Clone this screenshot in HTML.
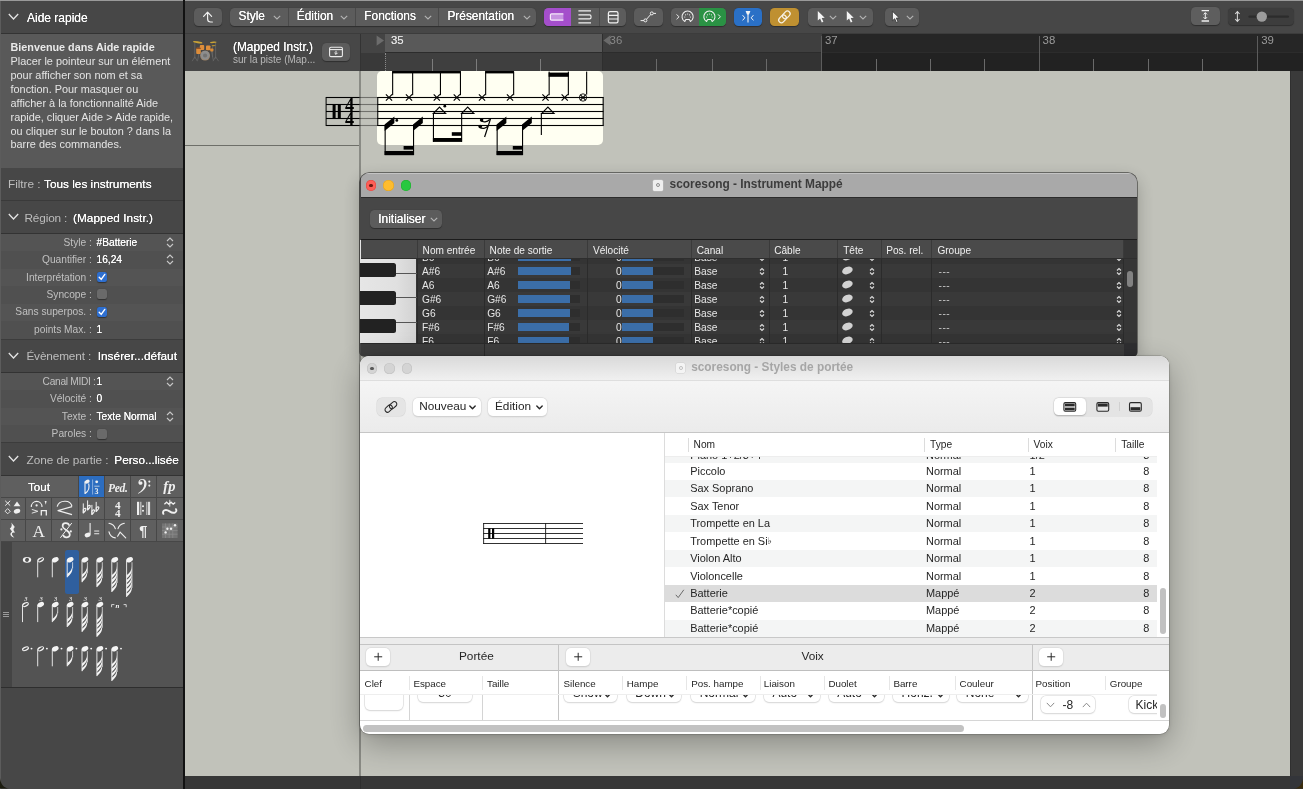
<!DOCTYPE html>
<html lang="fr"><head><meta charset="utf-8"><title>Logic Pro - Partition</title>
<style>
html,body{margin:0;padding:0}
body{width:1303px;height:790px;overflow:hidden;position:relative;background:#c1c2ba;font-family:"Liberation Sans","DejaVu Sans",sans-serif;-webkit-font-smoothing:antialiased}
.a{position:absolute;box-sizing:border-box}
.t{position:absolute;white-space:nowrap;line-height:1}
svg{position:absolute;overflow:visible}
#root{position:absolute;left:0;top:0;width:1303px;height:790px;overflow:hidden;will-change:transform;opacity:0.9999}
</style></head><body><div id="root">
<div class="a" id="left" style="left:0;top:0;width:183px;height:790px;background:#474747;overflow:hidden">
<div class="a" style="left:0px;top:0px;width:183px;height:1px;background:#9a9a9a;"></div>
<svg style="left:8px;top:13px" width="11" height="8" viewBox="0 0 11 8"><path d="M0.8 1 L5.5 6 L10.2 1" fill="none" stroke="#e4e4e4" stroke-width="1.3"/></svg>
<div class="t" style="top:12.30px;font-size:12.0px;color:#fff;left:27px;text-shadow:0 0 .4px #fff;">Aide rapide</div>
<div class="a" style="left:0px;top:33px;width:183px;height:1px;background:#333;"></div>
<div class="a" style="left:0px;top:34px;width:183px;height:134px;background:#595959;"></div>
<div class="t" style="top:41.90px;font-size:10.8px;color:#e9e9e9;font-weight:bold;left:10.5px;">Bienvenue dans Aide rapide</div>
<div class="t" style="top:56.35px;font-size:10.9px;color:#e4e4e4;left:10.5px;">Placer le pointeur sur un élément</div>
<div class="t" style="top:70.20px;font-size:10.9px;color:#e4e4e4;left:10.5px;">pour afficher son nom et sa</div>
<div class="t" style="top:84.05px;font-size:10.9px;color:#e4e4e4;left:10.5px;">fonction. Pour masquer ou</div>
<div class="t" style="top:97.90px;font-size:10.9px;color:#e4e4e4;left:10.5px;">afficher à la fonctionnalité Aide</div>
<div class="t" style="top:111.75px;font-size:10.9px;color:#e4e4e4;left:10.5px;">rapide, cliquer Aide &gt; Aide rapide,</div>
<div class="t" style="top:125.60px;font-size:10.9px;color:#e4e4e4;left:10.5px;">ou cliquer sur le bouton ? dans la</div>
<div class="t" style="top:139.45px;font-size:10.9px;color:#e4e4e4;left:10.5px;">barre des commandes.</div>
<div class="t" style="top:178.70px;font-size:11.8px;color:#bdbdbd;letter-spacing:-0.03px;left:8px;">Filtre :</div>
<div class="t" style="top:178.70px;font-size:11.8px;color:#fff;left:44px;text-shadow:0 0 .4px #fff;">Tous les instruments</div>
<div class="a" style="left:0px;top:200px;width:183px;height:1px;background:#3a3a3a;"></div>
<svg style="left:8px;top:213px" width="11" height="8" viewBox="0 0 11 8"><path d="M0.8 1 L5.5 6 L10.2 1" fill="none" stroke="#e4e4e4" stroke-width="1.3"/></svg>
<div class="t" style="top:212.50px;font-size:11.8px;color:#bdbdbd;letter-spacing:-0.15px;left:24.5px;">Région :</div>
<div class="t" style="top:212.50px;font-size:11.8px;color:#fff;letter-spacing:0.045px;left:73px;text-shadow:0 0 .4px #fff;">(Mapped Instr.)</div>
<div class="a" style="left:0px;top:233px;width:183px;height:1px;background:#333;"></div>
<div class="a" style="left:0px;top:234px;width:183px;height:105px;background:#505050;"></div>
<div class="a" style="left:0px;top:234.0px;width:183px;height:17.4px;background:#545454;"></div>
<div class="a" style="left:0px;top:268.8px;width:183px;height:17.4px;background:#545454;"></div>
<div class="a" style="left:0px;top:303.6px;width:183px;height:17.4px;background:#545454;"></div>
<div class="t" style="top:237.70px;font-size:10.2px;color:#c0c0c0;right:calc(100% - 91.8px);">Style :</div>
<div class="t" style="top:237.70px;font-size:10.2px;color:#fff;left:96.5px;text-shadow:0 0 .4px #fff;">#Batterie</div>
<svg style="left:166px;top:236.5px" width="8" height="11" viewBox="0 0 8 11"><path d="M1 4 L4 1 L7 4 M1 7 L4 10 L7 7" fill="none" stroke="#c8c8c8" stroke-width="1.1"/></svg>
<div class="t" style="top:255.10px;font-size:10.2px;color:#c0c0c0;right:calc(100% - 91.8px);">Quantifier :</div>
<div class="t" style="top:255.10px;font-size:10.2px;color:#fff;left:96.5px;text-shadow:0 0 .4px #fff;">16,24</div>
<svg style="left:166px;top:253.89999999999998px" width="8" height="11" viewBox="0 0 8 11"><path d="M1 4 L4 1 L7 4 M1 7 L4 10 L7 7" fill="none" stroke="#c8c8c8" stroke-width="1.1"/></svg>
<div class="t" style="top:272.50px;font-size:10.2px;color:#c0c0c0;right:calc(100% - 91.8px);">Interprétation :</div>
<div class="a" style="left:96.8px;top:271.8px;width:10px;height:10px;border-radius:2.2px;background:#2e6fd0;box-shadow:0 .5px 1px rgba(0,0,0,.4)"><svg style="left:0;top:0" width="10" height="10" viewBox="0 0 10 10"><path d="M2.2 5.2 L4.2 7.4 L7.8 2.4" fill="none" stroke="#fff" stroke-width="1.4" stroke-linecap="round" stroke-linejoin="round"/></svg></div>
<div class="t" style="top:289.90px;font-size:10.2px;color:#c0c0c0;right:calc(100% - 91.8px);">Syncope :</div>
<div class="a" style="left:96.8px;top:289.2px;width:10px;height:10px;border-radius:2.2px;background:#6a6a6a;box-shadow:0 .5px 1px rgba(0,0,0,.4)"></div>
<div class="t" style="top:307.30px;font-size:10.2px;color:#c0c0c0;right:calc(100% - 91.8px);">Sans superpos. :</div>
<div class="a" style="left:96.8px;top:306.6px;width:10px;height:10px;border-radius:2.2px;background:#2e6fd0;box-shadow:0 .5px 1px rgba(0,0,0,.4)"><svg style="left:0;top:0" width="10" height="10" viewBox="0 0 10 10"><path d="M2.2 5.2 L4.2 7.4 L7.8 2.4" fill="none" stroke="#fff" stroke-width="1.4" stroke-linecap="round" stroke-linejoin="round"/></svg></div>
<div class="t" style="top:324.70px;font-size:10.2px;color:#c0c0c0;right:calc(100% - 91.8px);">points Max. :</div>
<div class="t" style="top:324.70px;font-size:10.2px;color:#fff;left:96.5px;text-shadow:0 0 .4px #fff;">1</div>
<div class="a" style="left:0px;top:338.5px;width:183px;height:1px;background:#3c3c3c;"></div>
<svg style="left:8px;top:352px" width="11" height="8" viewBox="0 0 11 8"><path d="M0.8 1 L5.5 6 L10.2 1" fill="none" stroke="#e4e4e4" stroke-width="1.3"/></svg>
<div class="t" style="top:350.60px;font-size:11.8px;color:#bdbdbd;letter-spacing:-0.14px;left:26.4px;">Évènement :</div>
<div class="t" style="top:350.60px;font-size:11.8px;color:#fff;letter-spacing:0.04px;left:97.7px;text-shadow:0 0 .4px #fff;">Insérer...défaut</div>
<div class="a" style="left:0px;top:372px;width:183px;height:1px;background:#333;"></div>
<div class="a" style="left:0px;top:373px;width:183px;height:69px;background:#505050;"></div>
<div class="a" style="left:0px;top:373.0px;width:183px;height:17.3px;background:#545454;"></div>
<div class="a" style="left:0px;top:407.6px;width:183px;height:17.3px;background:#545454;"></div>
<div class="t" style="top:377.00px;font-size:10.2px;color:#c0c0c0;letter-spacing:-0.3px;right:calc(100% - 95.6px);">Canal MIDI :</div>
<div class="t" style="top:377.00px;font-size:10.2px;color:#fff;left:96.5px;text-shadow:0 0 .4px #fff;">1</div>
<svg style="left:166px;top:375.8px" width="8" height="11" viewBox="0 0 8 11"><path d="M1 4 L4 1 L7 4 M1 7 L4 10 L7 7" fill="none" stroke="#c8c8c8" stroke-width="1.1"/></svg>
<div class="t" style="top:394.40px;font-size:10.2px;color:#c0c0c0;right:calc(100% - 91.8px);">Vélocité :</div>
<div class="t" style="top:394.40px;font-size:10.2px;color:#fff;left:96.5px;text-shadow:0 0 .4px #fff;">0</div>
<div class="t" style="top:411.80px;font-size:10.2px;color:#c0c0c0;right:calc(100% - 91.8px);">Texte :</div>
<div class="t" style="top:411.80px;font-size:10.2px;color:#fff;left:96.5px;text-shadow:0 0 .4px #fff;">Texte Normal</div>
<svg style="left:166px;top:410.6px" width="8" height="11" viewBox="0 0 8 11"><path d="M1 4 L4 1 L7 4 M1 7 L4 10 L7 7" fill="none" stroke="#c8c8c8" stroke-width="1.1"/></svg>
<div class="t" style="top:429.20px;font-size:10.2px;color:#c0c0c0;right:calc(100% - 91.8px);">Paroles :</div>
<div class="a" style="left:96.8px;top:428.5px;width:10px;height:10px;border-radius:2.2px;background:#6a6a6a;box-shadow:0 .5px 1px rgba(0,0,0,.4)"></div>
<div class="a" style="left:0px;top:442px;width:183px;height:1px;background:#3c3c3c;"></div>
<svg style="left:8px;top:455px" width="11" height="8" viewBox="0 0 11 8"><path d="M0.8 1 L5.5 6 L10.2 1" fill="none" stroke="#e4e4e4" stroke-width="1.3"/></svg>
<div class="t" style="top:454.70px;font-size:11.8px;color:#bdbdbd;letter-spacing:-0.045px;left:26.6px;">Zone de partie :</div>
<div class="t" style="top:454.70px;font-size:11.8px;color:#fff;letter-spacing:-0.04px;left:114.3px;text-shadow:0 0 .4px #fff;">Perso...lisée</div>
<div class="a" style="left:0px;top:475px;width:183px;height:1px;background:#333;"></div>
<div class="a" style="left:0px;top:476px;width:77.7px;height:21.3px;background:#5f5f5f;"></div>
<div class="a" style="left:78.5px;top:476px;width:25.7px;height:21.3px;background:#2c6dc0;"></div>
<div class="a" style="left:105px;top:476px;width:25.3px;height:21.3px;background:#5f5f5f;"></div>
<div class="a" style="left:131px;top:476px;width:25.3px;height:21.3px;background:#5f5f5f;"></div>
<div class="a" style="left:157px;top:476px;width:26px;height:21.3px;background:#5f5f5f;"></div>
<div class="a" style="left:0px;top:498px;width:25.3px;height:21.3px;background:#5f5f5f;"></div>
<div class="a" style="left:26px;top:498px;width:25.3px;height:21.3px;background:#5f5f5f;"></div>
<div class="a" style="left:52px;top:498px;width:25.7px;height:21.3px;background:#5f5f5f;"></div>
<div class="a" style="left:78.5px;top:498px;width:25.7px;height:21.3px;background:#5f5f5f;"></div>
<div class="a" style="left:105px;top:498px;width:25.3px;height:21.3px;background:#5f5f5f;"></div>
<div class="a" style="left:131px;top:498px;width:25.3px;height:21.3px;background:#5f5f5f;"></div>
<div class="a" style="left:157px;top:498px;width:26px;height:21.3px;background:#5f5f5f;"></div>
<div class="a" style="left:0px;top:520px;width:25.3px;height:21.3px;background:#5f5f5f;"></div>
<div class="a" style="left:26px;top:520px;width:25.3px;height:21.3px;background:#5f5f5f;"></div>
<div class="a" style="left:52px;top:520px;width:25.7px;height:21.3px;background:#5f5f5f;"></div>
<div class="a" style="left:78.5px;top:520px;width:25.7px;height:21.3px;background:#5f5f5f;"></div>
<div class="a" style="left:105px;top:520px;width:25.3px;height:21.3px;background:#5f5f5f;"></div>
<div class="a" style="left:131px;top:520px;width:25.3px;height:21.3px;background:#5f5f5f;"></div>
<div class="a" style="left:157px;top:520px;width:26px;height:21.3px;background:#5f5f5f;"></div>
<div class="t" style="top:480.90px;font-size:11.6px;color:#fff;left:39px;transform:translateX(-50%);text-shadow:0 0 .4px #fff;">Tout</div>
<svg style="left:78.5px;top:476px" width="26" height="21" viewBox="0 0 26 21">
<ellipse cx="8.2" cy="5.6" rx="2.6" ry="1.9" transform="rotate(-25 8.2 5.6)" fill="#efefef"/>
<path d="M6 5.5 V18 M6.2 17.5 C9.5 15 11 12 9.6 7.5" fill="none" stroke="#efefef" stroke-width="1.1"/>
<path d="M13.6 3.5 V18.5" stroke="#9dbde6" stroke-width="0.8"/>
<circle cx="17.7" cy="5.8" r="1.4" fill="#efefef"/>
<path d="M15.3 10.2 H20.5" stroke="#efefef" stroke-width="0.7"/>
<text x="15.6" y="18" font-family="'Liberation Serif','DejaVu Serif',serif" font-weight="bold" font-size="8" fill="#efefef">3</text>
</svg>
<div class="t" style="top:482.85px;font-size:11.5px;color:#efefef;font-weight:bold;font-family:'Liberation Serif','DejaVu Serif',serif;left:117.8px;transform:translateX(-50%);font-style:italic;letter-spacing:-0.3px;">Ped.</div>
<svg style="left:131px;top:476px" width="26" height="21" viewBox="0 0 26 21">
<path d="M7.2 17.8 C12.5 15.5 15.6 11.8 15.6 7.6 C15.6 4.6 13.8 2.9 11.4 2.9 C9.0 2.9 7.4 4.5 7.4 6.4 C7.4 7.9 8.4 8.8 9.6 8.8 C10.7 8.8 11.5 8 11.5 7 C11.5 6 10.7 5.4 9.8 5.5 C9.3 5.5 9 5.7 8.7 5.9 C8.8 4.7 9.8 3.8 11.1 3.8 C12.6 3.8 13.3 5.3 13.3 7.6 C13.3 11.6 11 15 7 17.3 Z" fill="#efefef"/>
<circle cx="18.3" cy="5.6" r="1.05" fill="#efefef"/><circle cx="18.3" cy="9.6" r="1.05" fill="#efefef"/></svg>
<div class="t" style="top:479.15px;font-size:14.5px;color:#efefef;font-weight:bold;font-family:'Liberation Serif','DejaVu Serif',serif;left:169.4px;transform:translateX(-50%);font-style:italic;">fp</div>
<svg style="left:0px;top:498px" width="183" height="21" viewBox="0 0 183 21">
<g fill="none" stroke="#efefef" stroke-width="1">
<path d="M5.2 2.8 L10.2 7.6 M10.2 2.8 L5.2 7.6"/>
<path d="M7.7 10.6 L10.3 13.2 L7.7 15.8 L5.1 13.2 Z" stroke-width="0.9"/>
</g>
<path d="M13.6 8.2 L17 3.4 L20.4 8.2 Z" fill="#efefef"/>
<ellipse cx="17" cy="13.2" rx="3.3" ry="2.3" transform="rotate(-20 17 13.2)" fill="#efefef"/>
<!-- fermata etc -->
<g fill="none" stroke="#efefef" stroke-width="1.1">
<path d="M31.3 9 C31.3 1.5 42 1.5 42 9"/>
<path d="M31.8 11.4 L37.8 13.3 L31.8 15.2" stroke-width="0.9"/>
<path d="M41.3 17.5 V12.6 H46.3 V17.5" stroke-width="1.3"/>
</g>
<circle cx="36.6" cy="7.4" r="1.1" fill="#efefef"/>
<path d="M44.6 3 L46.6 3 L45.8 6.8 Z" fill="#efefef"/>
<!-- slur / hairpin -->
<g fill="none" stroke="#efefef" stroke-width="1.15" stroke-linejoin="round">
<path d="M57.2 8.6 C59 1.8 70.5 1.2 72 8.4"/>
<path d="M72 8.6 L58 12.6 L72 16.6"/>
</g>
<!-- flats -->
<path d="M83.3 5.4 V15.0" stroke="#efefef" stroke-width="1" fill="none"/><path d="M83.3 11.4 C85.7 9.0 87.7 11.0 83.3 15.0 Z" fill="none" stroke="#efefef" stroke-width="1.15" stroke-linejoin="round"/><path d="M87.6 2.4 V12.0" stroke="#efefef" stroke-width="1" fill="none"/><path d="M87.6 8.4 C90.0 6.0 92.0 8.0 87.6 12.0 Z" fill="none" stroke="#efefef" stroke-width="1.15" stroke-linejoin="round"/><path d="M91.9 6.9 V16.5" stroke="#efefef" stroke-width="1" fill="none"/><path d="M91.9 12.9 C94.30000000000001 10.5 96.30000000000001 12.5 91.9 16.5 Z" fill="none" stroke="#efefef" stroke-width="1.15" stroke-linejoin="round"/><path d="M96.2 3.9 V13.5" stroke="#efefef" stroke-width="1" fill="none"/><path d="M96.2 9.9 C98.60000000000001 7.5 100.60000000000001 9.5 96.2 13.5 Z" fill="none" stroke="#efefef" stroke-width="1.15" stroke-linejoin="round"/>
<!-- repeat bars -->
<rect x="137" y="3.8" width="2.2" height="13.2" fill="#efefef"/><rect x="140.4" y="3.8" width="0.9" height="13.2" fill="#efefef"/>
<circle cx="143" cy="8.2" r="1.05" fill="#efefef"/><circle cx="143" cy="12.8" r="1.05" fill="#efefef"/>
<rect x="146.4" y="3.8" width="0.9" height="13.2" fill="#dcdcdc"/><rect x="148" y="3.8" width="2.1" height="13.2" fill="#dcdcdc"/>
<!-- ornaments -->
<g fill="none" stroke="#efefef" stroke-linecap="round">
<path d="M163.4 15.8 C161.8 12.6 165.6 10.6 169.6 13.4 C173.6 16.2 177.6 14.4 176 11.2" stroke-width="1.9"/>
<path d="M164.4 6.2 L166.6 4.2 L168.8 6.2 L171 4.2 L173.2 6.2 L175.2 4.4" stroke-width="1.3" stroke-linecap="butt"/>
<path d="M169.8 2.2 V8.2" stroke-width="0.9"/>
</g>
</svg>
<div class="t" style="top:500.00px;font-size:11.2px;color:#efefef;font-weight:bold;font-family:'Liberation Serif','DejaVu Serif',serif;left:117.8px;transform:translateX(-50%);">4</div>
<div class="t" style="top:507.80px;font-size:11.2px;color:#efefef;font-weight:bold;font-family:'Liberation Serif','DejaVu Serif',serif;left:117.8px;transform:translateX(-50%);">4</div>
<svg style="left:0px;top:520px" width="183" height="21" viewBox="0 0 183 21">
<!-- quarter rest -->
<path d="M11.3 2.4 L14.8 7 C13 8.6 13 10.2 15.2 12.6 C13 12 11.6 12.8 12 14.6 C12.3 15.8 13.2 16.6 14.4 17.6 C10.8 16.6 9.2 14.2 11.4 12.2 L12 11.6 L9.8 8.6 C11.8 7 12.2 5 11.3 2.4 Z" fill="#efefef"/>
<!-- segno -->
<g fill="none" stroke="#efefef">
<path d="M69.2 5.6 C68.4 2.2 62.4 2.4 62.6 6.2 C62.8 9.8 69.6 10.4 69.8 14.4 C70 18 64 18.4 63.2 15" stroke-width="1.7"/>
<path d="M60.4 17.8 L71.8 3" stroke-width="1"/>
</g>
<circle cx="61.4" cy="9.4" r="1.1" fill="#efefef"/><circle cx="70.8" cy="11.4" r="1.1" fill="#efefef"/>
<!-- quarter = -->
<ellipse cx="87.6" cy="15" rx="3" ry="2.2" transform="rotate(-22 87.6 15)" fill="#efefef"/>
<path d="M90.1 14.6 V3" stroke="#efefef" stroke-width="1.1"/>
<rect x="94.2" y="10.4" width="5" height="1.3" fill="#c8c8c8"/><rect x="94.2" y="13" width="5" height="1.3" fill="#c8c8c8"/>
<!-- crossing curves -->
<g fill="none" stroke="#efefef" stroke-width="1.15" stroke-linecap="round">
<path d="M109 3.3 Q114.2 4.4 115.3 8.6"/>
<path d="M109 11.8 Q110 16.8 115.3 17.9"/>
<path d="M124.3 3.3 Q119.2 4.4 118 8.6"/>
<path d="M117.6 16.2 L120.1 12.2 L125.7 17.9"/>
</g>
<!-- grid -->
<rect x="162" y="3.4" width="15.6" height="14.6" fill="#747474"/>
<g stroke="#8e8e8e" stroke-width="0.7"><path d="M165.6 3.4 V18 M169.2 3.4 V18 M172.8 3.4 V18 M162 7 H177.6 M162 10.6 H177.6 M162 14.2 H177.6"/></g>
<circle cx="175" cy="5.2" r="1.2" fill="#efefef"/><circle cx="171" cy="8.8" r="1.2" fill="#efefef"/><circle cx="167.4" cy="8.8" r="1.2" fill="#efefef"/><circle cx="165.6" cy="12.4" r="1.2" fill="#efefef"/>
</svg>
<div class="t" style="top:523.30px;font-size:17.2px;color:#efefef;font-family:'Liberation Serif','DejaVu Serif',serif;left:38.8px;transform:translateX(-50%);">A</div>
<div class="t" style="top:524.35px;font-size:14.5px;color:#efefef;font-weight:bold;left:143.4px;transform:translateX(-50%);">¶</div>
<div class="a" style="left:0px;top:541.5px;width:183px;height:145.5px;background:#535353;"></div>
<div class="a" style="left:0px;top:541.5px;width:12px;height:145.5px;background:#444444;"></div>
<div class="a" style="left:0px;top:687px;width:183px;height:1px;background:#2e2e2e;"></div>
<div class="a" style="left:64.8px;top:550px;width:14.4px;height:43.6px;background:#2f5f9e;border-radius:2.5px"></div>
<div class="a" style="left:3px;top:611.6px;width:6.2px;height:0.8px;background:#9a9a9a;"></div>
<div class="a" style="left:3px;top:613.7px;width:6.2px;height:0.8px;background:#9a9a9a;"></div>
<div class="a" style="left:3px;top:615.8000000000001px;width:6.2px;height:0.8px;background:#9a9a9a;"></div>
<svg style="left:0;top:0" width="183" height="790" viewBox="0 0 183 790"><ellipse cx="27" cy="559.8" rx="4.2" ry="2.9" fill="#f4f4f4"/><ellipse cx="27" cy="559.8" rx="1.9" ry="2.1" transform="rotate(35 27 559.8)" fill="#535353"/><ellipse cx="40.7" cy="559.8" rx="3.5" ry="2.2" transform="rotate(-25 40.7 559.8)" fill="#f4f4f4"/><ellipse cx="40.7" cy="559.8" rx="2.7" ry="0.9" transform="rotate(-32 40.7 559.8)" fill="#535353"/><path d="M37.7 560.4 V577.3" stroke="#f4f4f4" stroke-width="0.9" fill="none"/><ellipse cx="55.3" cy="559.8" rx="3.5" ry="2.4" transform="rotate(-25 55.3 559.8)" fill="#f4f4f4"/><path d="M52.3 560.4 V577.3" stroke="#f4f4f4" stroke-width="0.9" fill="none"/><ellipse cx="70.2" cy="559.8" rx="3.5" ry="2.4" transform="rotate(-25 70.2 559.8)" fill="#f4f4f4"/><path d="M67.2 560.4 V577.3" stroke="#f4f4f4" stroke-width="0.9" fill="none"/><path d="M67.2 577.3 C70.4 574.6999999999999 72.8 571.3 72.4 567.6999999999999 L72.4 565.0999999999999 C72.4 569.3 70.2 571.9 67.2 574.0999999999999 Z" fill="#f4f4f4"/><path d="M72.60000000000001 562.1999999999999 V568.3" stroke="#f4f4f4" stroke-width="0.7" fill="none"/><ellipse cx="85" cy="559.8" rx="3.5" ry="2.4" transform="rotate(-25 85 559.8)" fill="#f4f4f4"/><path d="M82.0 560.4 V582.1999999999999" stroke="#f4f4f4" stroke-width="0.9" fill="none"/><path d="M82.0 582.1999999999999 C85.2 579.5999999999999 87.6 576.1999999999999 87.2 572.5999999999999 L87.2 569.9999999999999 C87.2 574.1999999999999 85.0 576.8 82.0 578.9999999999999 Z" fill="#f4f4f4"/><path d="M82.0 577.5999999999999 C85.2 574.9999999999999 87.6 571.5999999999999 87.2 567.9999999999999 L87.2 565.3999999999999 C87.2 569.5999999999999 85.0 572.1999999999999 82.0 574.3999999999999 Z" fill="#f4f4f4"/><path d="M87.4 562.1999999999999 V573.1999999999999" stroke="#f4f4f4" stroke-width="0.7" fill="none"/><ellipse cx="99.9" cy="559.8" rx="3.5" ry="2.4" transform="rotate(-25 99.9 559.8)" fill="#f4f4f4"/><path d="M96.9 560.4 V587.0999999999999" stroke="#f4f4f4" stroke-width="0.9" fill="none"/><path d="M96.9 587.0999999999999 C100.10000000000001 584.4999999999999 102.5 581.0999999999999 102.10000000000001 577.4999999999999 L102.10000000000001 574.8999999999999 C102.10000000000001 579.0999999999999 99.9 581.6999999999999 96.9 583.8999999999999 Z" fill="#f4f4f4"/><path d="M96.9 582.4999999999999 C100.10000000000001 579.8999999999999 102.5 576.4999999999999 102.10000000000001 572.8999999999999 L102.10000000000001 570.2999999999998 C102.10000000000001 574.4999999999999 99.9 577.0999999999999 96.9 579.2999999999998 Z" fill="#f4f4f4"/><path d="M96.9 577.8999999999999 C100.10000000000001 575.2999999999998 102.5 571.8999999999999 102.10000000000001 568.2999999999998 L102.10000000000001 565.6999999999998 C102.10000000000001 569.8999999999999 99.9 572.4999999999999 96.9 574.6999999999998 Z" fill="#f4f4f4"/><path d="M102.30000000000001 562.1999999999999 V578.0999999999999" stroke="#f4f4f4" stroke-width="0.7" fill="none"/><ellipse cx="114.8" cy="559.8" rx="3.5" ry="2.4" transform="rotate(-25 114.8 559.8)" fill="#f4f4f4"/><path d="M111.8 560.4 V592.0" stroke="#f4f4f4" stroke-width="0.9" fill="none"/><path d="M111.8 592.0 C115.0 589.4 117.39999999999999 586.0 117.0 582.4 L117.0 579.8 C117.0 584.0 114.8 586.6 111.8 588.8 Z" fill="#f4f4f4"/><path d="M111.8 587.4 C115.0 584.8 117.39999999999999 581.4 117.0 577.8 L117.0 575.1999999999999 C117.0 579.4 114.8 582.0 111.8 584.1999999999999 Z" fill="#f4f4f4"/><path d="M111.8 582.8 C115.0 580.1999999999999 117.39999999999999 576.8 117.0 573.1999999999999 L117.0 570.5999999999999 C117.0 574.8 114.8 577.4 111.8 579.5999999999999 Z" fill="#f4f4f4"/><path d="M111.8 578.2 C115.0 575.6 117.39999999999999 572.2 117.0 568.6 L117.0 566.0 C117.0 570.2 114.8 572.8000000000001 111.8 575.0 Z" fill="#f4f4f4"/><path d="M117.2 562.1999999999999 V583.0" stroke="#f4f4f4" stroke-width="0.7" fill="none"/><ellipse cx="129.6" cy="559.8" rx="3.5" ry="2.4" transform="rotate(-25 129.6 559.8)" fill="#f4f4f4"/><path d="M126.6 560.4 V596.9" stroke="#f4f4f4" stroke-width="0.9" fill="none"/><path d="M126.6 596.9 C129.79999999999998 594.3 132.2 590.9 131.79999999999998 587.3 L131.79999999999998 584.6999999999999 C131.79999999999998 588.9 129.6 591.5 126.6 593.6999999999999 Z" fill="#f4f4f4"/><path d="M126.6 592.3 C129.79999999999998 589.6999999999999 132.2 586.3 131.79999999999998 582.6999999999999 L131.79999999999998 580.0999999999999 C131.79999999999998 584.3 129.6 586.9 126.6 589.0999999999999 Z" fill="#f4f4f4"/><path d="M126.6 587.6999999999999 C129.79999999999998 585.0999999999999 132.2 581.6999999999999 131.79999999999998 578.0999999999999 L131.79999999999998 575.4999999999999 C131.79999999999998 579.6999999999999 129.6 582.3 126.6 584.4999999999999 Z" fill="#f4f4f4"/><path d="M126.6 583.1 C129.79999999999998 580.5 132.2 577.1 131.79999999999998 573.5 L131.79999999999998 570.9 C131.79999999999998 575.1 129.6 577.7 126.6 579.9 Z" fill="#f4f4f4"/><path d="M126.6 578.5 C129.79999999999998 575.9 132.2 572.5 131.79999999999998 568.9 L131.79999999999998 566.3 C131.79999999999998 570.5 129.6 573.1 126.6 575.3 Z" fill="#f4f4f4"/><path d="M132.0 562.1999999999999 V587.9" stroke="#f4f4f4" stroke-width="0.7" fill="none"/><ellipse cx="25.5" cy="604.6" rx="3.5" ry="2.2" transform="rotate(-25 25.5 604.6)" fill="#f4f4f4"/><ellipse cx="25.5" cy="604.6" rx="2.7" ry="0.9" transform="rotate(-32 25.5 604.6)" fill="#535353"/><path d="M22.5 605.2 V622.1" stroke="#f4f4f4" stroke-width="0.9" fill="none"/><text x="24.3" y="601.0" font-family="'Liberation Serif',serif" font-style="italic" font-size="6.5" fill="#f4f4f4">3</text><ellipse cx="40.7" cy="604.6" rx="3.5" ry="2.4" transform="rotate(-25 40.7 604.6)" fill="#f4f4f4"/><path d="M37.7 605.2 V622.1" stroke="#f4f4f4" stroke-width="0.9" fill="none"/><text x="39.5" y="601.0" font-family="'Liberation Serif',serif" font-style="italic" font-size="6.5" fill="#f4f4f4">3</text><ellipse cx="55.3" cy="604.6" rx="3.5" ry="2.4" transform="rotate(-25 55.3 604.6)" fill="#f4f4f4"/><path d="M52.3 605.2 V622.1" stroke="#f4f4f4" stroke-width="0.9" fill="none"/><path d="M52.3 622.1 C55.5 619.5 57.9 616.1 57.5 612.5 L57.5 609.9 C57.5 614.1 55.3 616.7 52.3 618.9 Z" fill="#f4f4f4"/><path d="M57.699999999999996 607.0 V613.1" stroke="#f4f4f4" stroke-width="0.7" fill="none"/><text x="54.099999999999994" y="601.0" font-family="'Liberation Serif',serif" font-style="italic" font-size="6.5" fill="#f4f4f4">3</text><ellipse cx="70.2" cy="604.6" rx="3.5" ry="2.4" transform="rotate(-25 70.2 604.6)" fill="#f4f4f4"/><path d="M67.2 605.2 V627.0" stroke="#f4f4f4" stroke-width="0.9" fill="none"/><path d="M67.2 627.0 C70.4 624.4 72.8 621.0 72.4 617.4 L72.4 614.8 C72.4 619.0 70.2 621.6 67.2 623.8 Z" fill="#f4f4f4"/><path d="M67.2 622.4 C70.4 619.8 72.8 616.4 72.4 612.8 L72.4 610.1999999999999 C72.4 614.4 70.2 617.0 67.2 619.1999999999999 Z" fill="#f4f4f4"/><path d="M72.60000000000001 607.0 V618.0" stroke="#f4f4f4" stroke-width="0.7" fill="none"/><text x="69.0" y="601.0" font-family="'Liberation Serif',serif" font-style="italic" font-size="6.5" fill="#f4f4f4">3</text><ellipse cx="85" cy="604.6" rx="3.5" ry="2.4" transform="rotate(-25 85 604.6)" fill="#f4f4f4"/><path d="M82.0 605.2 V631.9" stroke="#f4f4f4" stroke-width="0.9" fill="none"/><path d="M82.0 631.9 C85.2 629.3 87.6 625.9 87.2 622.3 L87.2 619.6999999999999 C87.2 623.9 85.0 626.5 82.0 628.6999999999999 Z" fill="#f4f4f4"/><path d="M82.0 627.3 C85.2 624.6999999999999 87.6 621.3 87.2 617.6999999999999 L87.2 615.0999999999999 C87.2 619.3 85.0 621.9 82.0 624.0999999999999 Z" fill="#f4f4f4"/><path d="M82.0 622.6999999999999 C85.2 620.0999999999999 87.6 616.6999999999999 87.2 613.0999999999999 L87.2 610.4999999999999 C87.2 614.6999999999999 85.0 617.3 82.0 619.4999999999999 Z" fill="#f4f4f4"/><path d="M87.4 607.0 V622.9" stroke="#f4f4f4" stroke-width="0.7" fill="none"/><text x="83.8" y="601.0" font-family="'Liberation Serif',serif" font-style="italic" font-size="6.5" fill="#f4f4f4">3</text><ellipse cx="99.9" cy="604.6" rx="3.5" ry="2.4" transform="rotate(-25 99.9 604.6)" fill="#f4f4f4"/><path d="M96.9 605.2 V636.8000000000001" stroke="#f4f4f4" stroke-width="0.9" fill="none"/><path d="M96.9 636.8000000000001 C100.10000000000001 634.2 102.5 630.8000000000001 102.10000000000001 627.2 L102.10000000000001 624.6 C102.10000000000001 628.8000000000001 99.9 631.4000000000001 96.9 633.6 Z" fill="#f4f4f4"/><path d="M96.9 632.2 C100.10000000000001 629.6 102.5 626.2 102.10000000000001 622.6 L102.10000000000001 620.0 C102.10000000000001 624.2 99.9 626.8000000000001 96.9 629.0 Z" fill="#f4f4f4"/><path d="M96.9 627.6 C100.10000000000001 625.0 102.5 621.6 102.10000000000001 618.0 L102.10000000000001 615.4 C102.10000000000001 619.6 99.9 622.2 96.9 624.4 Z" fill="#f4f4f4"/><path d="M96.9 623.0000000000001 C100.10000000000001 620.4000000000001 102.5 617.0000000000001 102.10000000000001 613.4000000000001 L102.10000000000001 610.8000000000001 C102.10000000000001 615.0000000000001 99.9 617.6000000000001 96.9 619.8000000000001 Z" fill="#f4f4f4"/><path d="M102.30000000000001 607.0 V627.8000000000001" stroke="#f4f4f4" stroke-width="0.7" fill="none"/><text x="98.7" y="601.0" font-family="'Liberation Serif',serif" font-style="italic" font-size="6.5" fill="#f4f4f4">3</text><g fill="none" stroke="#f4f4f4" stroke-width="0.8"><path d="M111.6 607.2 V604.6 H114.4 M123.6 604.6 H126.2 V607.2"/></g><text x="115.6" y="608" font-family="'Liberation Serif',serif" font-style="italic" font-weight="bold" font-size="7" fill="#f4f4f4">n</text><ellipse cx="25.5" cy="648.8" rx="3.6" ry="2.1" transform="rotate(-20 25.5 648.8)" fill="#f4f4f4"/><ellipse cx="25.5" cy="648.8" rx="2.6" ry="0.9" transform="rotate(-28 25.5 648.8)" fill="#535353"/><circle cx="31.5" cy="648.6" r="0.95" fill="#f4f4f4"/><ellipse cx="40.7" cy="648.8" rx="3.5" ry="2.2" transform="rotate(-25 40.7 648.8)" fill="#f4f4f4"/><ellipse cx="40.7" cy="648.8" rx="2.7" ry="0.9" transform="rotate(-32 40.7 648.8)" fill="#535353"/><path d="M37.7 649.4 V666.3" stroke="#f4f4f4" stroke-width="0.9" fill="none"/><circle cx="46.900000000000006" cy="648.5999999999999" r="0.95" fill="#f4f4f4"/><ellipse cx="55.3" cy="648.8" rx="3.5" ry="2.4" transform="rotate(-25 55.3 648.8)" fill="#f4f4f4"/><path d="M52.3 649.4 V666.3" stroke="#f4f4f4" stroke-width="0.9" fill="none"/><circle cx="61.5" cy="648.5999999999999" r="0.95" fill="#f4f4f4"/><ellipse cx="70.2" cy="648.8" rx="3.5" ry="2.4" transform="rotate(-25 70.2 648.8)" fill="#f4f4f4"/><path d="M67.2 649.4 V666.3" stroke="#f4f4f4" stroke-width="0.9" fill="none"/><path d="M67.2 666.3 C70.4 663.6999999999999 72.8 660.3 72.4 656.6999999999999 L72.4 654.0999999999999 C72.4 658.3 70.2 660.9 67.2 663.0999999999999 Z" fill="#f4f4f4"/><path d="M72.60000000000001 651.1999999999999 V657.3" stroke="#f4f4f4" stroke-width="0.7" fill="none"/><circle cx="76.4" cy="648.5999999999999" r="0.95" fill="#f4f4f4"/><ellipse cx="85" cy="648.8" rx="3.5" ry="2.4" transform="rotate(-25 85 648.8)" fill="#f4f4f4"/><path d="M82.0 649.4 V671.1999999999999" stroke="#f4f4f4" stroke-width="0.9" fill="none"/><path d="M82.0 671.1999999999999 C85.2 668.5999999999999 87.6 665.1999999999999 87.2 661.5999999999999 L87.2 658.9999999999999 C87.2 663.1999999999999 85.0 665.8 82.0 667.9999999999999 Z" fill="#f4f4f4"/><path d="M82.0 666.5999999999999 C85.2 663.9999999999999 87.6 660.5999999999999 87.2 656.9999999999999 L87.2 654.3999999999999 C87.2 658.5999999999999 85.0 661.1999999999999 82.0 663.3999999999999 Z" fill="#f4f4f4"/><path d="M87.4 651.1999999999999 V662.1999999999999" stroke="#f4f4f4" stroke-width="0.7" fill="none"/><circle cx="91.2" cy="648.5999999999999" r="0.95" fill="#f4f4f4"/><ellipse cx="99.9" cy="648.8" rx="3.5" ry="2.4" transform="rotate(-25 99.9 648.8)" fill="#f4f4f4"/><path d="M96.9 649.4 V676.0999999999999" stroke="#f4f4f4" stroke-width="0.9" fill="none"/><path d="M96.9 676.0999999999999 C100.10000000000001 673.4999999999999 102.5 670.0999999999999 102.10000000000001 666.4999999999999 L102.10000000000001 663.8999999999999 C102.10000000000001 668.0999999999999 99.9 670.6999999999999 96.9 672.8999999999999 Z" fill="#f4f4f4"/><path d="M96.9 671.4999999999999 C100.10000000000001 668.8999999999999 102.5 665.4999999999999 102.10000000000001 661.8999999999999 L102.10000000000001 659.2999999999998 C102.10000000000001 663.4999999999999 99.9 666.0999999999999 96.9 668.2999999999998 Z" fill="#f4f4f4"/><path d="M96.9 666.8999999999999 C100.10000000000001 664.2999999999998 102.5 660.8999999999999 102.10000000000001 657.2999999999998 L102.10000000000001 654.6999999999998 C102.10000000000001 658.8999999999999 99.9 661.4999999999999 96.9 663.6999999999998 Z" fill="#f4f4f4"/><path d="M102.30000000000001 651.1999999999999 V667.0999999999999" stroke="#f4f4f4" stroke-width="0.7" fill="none"/><circle cx="106.10000000000001" cy="648.5999999999999" r="0.95" fill="#f4f4f4"/><ellipse cx="114.8" cy="648.8" rx="3.5" ry="2.4" transform="rotate(-25 114.8 648.8)" fill="#f4f4f4"/><path d="M111.8 649.4 V681.0" stroke="#f4f4f4" stroke-width="0.9" fill="none"/><path d="M111.8 681.0 C115.0 678.4 117.39999999999999 675.0 117.0 671.4 L117.0 668.8 C117.0 673.0 114.8 675.6 111.8 677.8 Z" fill="#f4f4f4"/><path d="M111.8 676.4 C115.0 673.8 117.39999999999999 670.4 117.0 666.8 L117.0 664.1999999999999 C117.0 668.4 114.8 671.0 111.8 673.1999999999999 Z" fill="#f4f4f4"/><path d="M111.8 671.8 C115.0 669.1999999999999 117.39999999999999 665.8 117.0 662.1999999999999 L117.0 659.5999999999999 C117.0 663.8 114.8 666.4 111.8 668.5999999999999 Z" fill="#f4f4f4"/><path d="M111.8 667.2 C115.0 664.6 117.39999999999999 661.2 117.0 657.6 L117.0 655.0 C117.0 659.2 114.8 661.8000000000001 111.8 664.0 Z" fill="#f4f4f4"/><path d="M117.2 651.1999999999999 V672.0" stroke="#f4f4f4" stroke-width="0.7" fill="none"/><circle cx="121.0" cy="648.5999999999999" r="0.95" fill="#f4f4f4"/></svg>
</div>
<div class="a" style="left:183.2px;top:0px;width:1.9px;height:788.5px;background:#121212;"></div>
<div class="a" style="left:185px;top:0px;width:1118px;height:33px;background:#474747;"></div>
<div class="a" style="left:185px;top:0px;width:1118px;height:1px;background:#9a9a9a;"></div>
<div class="a" style="left:194px;top:8px;width:28px;height:18px;border-radius:4.5px;background:#5c5c5c;box-shadow:0 0.5px 1px rgba(0,0,0,.35);"></div>
<svg style="left:194px;top:8px" width="28" height="18" viewBox="0 0 28 18"><path d="M9.6 8.4 L13.6 4.2 L17.6 8.4 M13.6 4.4 V11 C13.6 13 14.6 14 16.6 14 H18.4" fill="none" stroke="#f0f0f0" stroke-width="1.2" stroke-linecap="round" stroke-linejoin="round"/></svg>
<div class="a" style="left:230px;top:8px;width:306px;height:18px;border-radius:4.5px;background:#5c5c5c;box-shadow:0 0.5px 1px rgba(0,0,0,.35);"></div>
<div class="a" style="left:287.5px;top:8px;width:1px;height:18px;background:#4a4a4a;"></div>
<div class="a" style="left:355px;top:8px;width:1px;height:18px;background:#4a4a4a;"></div>
<div class="a" style="left:438.2px;top:8px;width:1px;height:18px;background:#4a4a4a;"></div>
<div class="t" style="top:10.85px;font-size:11.9px;color:#fff;left:238.5px;text-shadow:0 0 .4px #fff;">Style</div>
<svg style="left:272.5px;top:14.5px" width="8" height="5" viewBox="0 0 8 5"><path d="M0.8 0.8 L4 4 L7.2 0.8" fill="none" stroke="#b4b4b4" stroke-width="1.1"/></svg>
<div class="t" style="top:10.85px;font-size:11.9px;color:#fff;left:296.8px;text-shadow:0 0 .4px #fff;">Édition</div>
<svg style="left:340px;top:14.5px" width="8" height="5" viewBox="0 0 8 5"><path d="M0.8 0.8 L4 4 L7.2 0.8" fill="none" stroke="#b4b4b4" stroke-width="1.1"/></svg>
<div class="t" style="top:10.85px;font-size:11.9px;color:#fff;left:364.3px;text-shadow:0 0 .4px #fff;">Fonctions</div>
<svg style="left:424px;top:14.5px" width="8" height="5" viewBox="0 0 8 5"><path d="M0.8 0.8 L4 4 L7.2 0.8" fill="none" stroke="#b4b4b4" stroke-width="1.1"/></svg>
<div class="t" style="top:10.85px;font-size:11.9px;color:#fff;left:447.4px;text-shadow:0 0 .4px #fff;">Présentation</div>
<svg style="left:522.5px;top:14.5px" width="8" height="5" viewBox="0 0 8 5"><path d="M0.8 0.8 L4 4 L7.2 0.8" fill="none" stroke="#b4b4b4" stroke-width="1.1"/></svg>
<div class="a" style="left:543.8px;top:8px;width:82.6px;height:18px;border-radius:4.5px;background:#5c5c5c;box-shadow:0 0.5px 1px rgba(0,0,0,.35);"></div>
<div class="a" style="left:543.8px;top:8px;width:27.4px;height:18px;border-radius:4.5px 0 0 4.5px;background:#a44ecb"></div>
<div class="a" style="left:598.6px;top:8px;width:1px;height:18px;background:#4a4a4a;"></div>
<svg style="left:543.8px;top:8px" width="83" height="18" viewBox="0 0 83 18">
<path d="M19.4 5.9 H7.6 Q6.4 5.9 6.4 7.1 V10.9 Q6.4 12.1 7.6 12.1 H19.4" fill="#c692e0" stroke="#f6eafb" stroke-width="1.2"/>
<g fill="none" stroke="#f0f0f0" stroke-width="1.15"><path d="M34.4 2.9 H47 M34.4 6.9 H45.6 Q47 6.9 47 8.3 V9.5 Q47 10.9 45.6 10.9 H34.4 M34.4 14.9 H47"/></g>
<rect x="64.4" y="3.6" width="9.6" height="11.2" rx="1.6" fill="none" stroke="#f0f0f0" stroke-width="1.25"/><path d="M64.4 7.4 H74 M64.4 11 H74" stroke="#f0f0f0" stroke-width="1.1"/>
</svg>
<div class="a" style="left:634px;top:8px;width:28.8px;height:18px;border-radius:4.5px;background:#5c5c5c;box-shadow:0 0.5px 1px rgba(0,0,0,.35);"></div>
<svg style="left:634px;top:8px" width="29" height="18" viewBox="0 0 29 18"><g fill="none" stroke="#f0f0f0" stroke-width="1"><path d="M6.6 12.6 H10 M12.4 11.4 L17 6.2 M19.4 5.4 H22"/><circle cx="11.4" cy="12.4" r="1.5"/><circle cx="17.8" cy="5.4" r="1.5"/></g></svg>
<div class="a" style="left:670.8px;top:8px;width:55px;height:18px;border-radius:4.5px;background:#5c5c5c;box-shadow:0 0.5px 1px rgba(0,0,0,.35);"></div>
<div class="a" style="left:698.6px;top:8px;width:27.2px;height:18px;border-radius:0 4.5px 4.5px 0;background:#2a9244"></div>
<svg style="left:670.8px;top:8px" width="55" height="18" viewBox="0 0 55 18">
<path d="M5.6 6.4 L8 8.8 L5.6 11.2" fill="none" stroke="#f0f0f0" stroke-width="1"/><path d="M13.8 13.5 A5.6 5.6 0 1 1 19.400000000000002 13.5 L18.400000000000002 11.399999999999999 H14.8 Z" fill="none" stroke="#f0f0f0" stroke-width="1.05" stroke-linejoin="round"/><g fill="#f0f0f0"><circle cx="13.8" cy="9.0" r="0.6"/><circle cx="19.400000000000002" cy="9.0" r="0.6"/><circle cx="16.6" cy="6.0" r="0.6"/><circle cx="14.600000000000001" cy="6.8" r="0.6"/><circle cx="18.6" cy="6.8" r="0.6"/></g>
<path d="M35.6 13.5 A5.6 5.6 0 1 1 41.199999999999996 13.5 L40.199999999999996 11.399999999999999 H36.6 Z" fill="none" stroke="#f0f0f0" stroke-width="1.05" stroke-linejoin="round"/><g fill="#f0f0f0"><circle cx="35.6" cy="9.0" r="0.6"/><circle cx="41.199999999999996" cy="9.0" r="0.6"/><circle cx="38.4" cy="6.0" r="0.6"/><circle cx="36.4" cy="6.8" r="0.6"/><circle cx="40.4" cy="6.8" r="0.6"/></g><path d="M47 6.4 L49.4 8.8 L47 11.2" fill="none" stroke="#f0f0f0" stroke-width="1"/></svg>
<div class="a" style="left:733.8px;top:8px;width:28.4px;height:18px;border-radius:4.5px;background:#2a70c6;box-shadow:0 0.5px 1px rgba(0,0,0,.35);"></div>
<svg style="left:733.8px;top:8px" width="28" height="18" viewBox="0 0 28 18"><path d="M11.6 3 H16.4 L15 6.4 H13 Z" fill="#f4f4f4"/><path d="M14 6 V14.4" stroke="#f4f4f4" stroke-width="1.1"/><path d="M8.6 7.2 L10.8 9.8 L8.6 12.4 M19.4 7.2 L17.2 9.8 L19.4 12.4" fill="none" stroke="#f4f4f4" stroke-width="1"/></svg>
<div class="a" style="left:770.2px;top:8px;width:28.8px;height:18px;border-radius:4.5px;background:#bf9031;box-shadow:0 0.5px 1px rgba(0,0,0,.35);"></div>
<svg style="left:770.2px;top:8px" width="29" height="18" viewBox="0 0 29 18"><g fill="none" stroke="#f6f0e2" stroke-width="1.25"><rect x="-4.3" y="-2.7" width="8.6" height="5.4" rx="2.7" transform="translate(12.5 10.9) rotate(-47)"/><rect x="-4.3" y="-2.7" width="8.6" height="5.4" rx="2.7" transform="translate(16.3 6.9) rotate(-47)"/></g></svg>
<div class="a" style="left:807.8px;top:8px;width:65px;height:18px;border-radius:4.5px;background:#5c5c5c;box-shadow:0 0.5px 1px rgba(0,0,0,.35);"></div>
<svg style="left:807.8px;top:8px" width="65" height="18" viewBox="0 0 65 18"><path transform="translate(9.8 3)" d="M0 0 V9.6 L2.3 7.5 L4 11.4 L5.6 10.7 L3.9 6.9 L6.9 6.7 Z" fill="#f4f4f4" stroke="none" stroke-width="0.8" stroke-linejoin="round"/><path transform="translate(38.8 3)" d="M0 0 V9.6 L2.3 7.5 L4 11.4 L5.6 10.7 L3.9 6.9 L6.9 6.7 Z" fill="#f4f4f4" stroke="none" stroke-width="0.8" stroke-linejoin="round"/></svg>
<svg style="left:829.4px;top:14.5px" width="8" height="5" viewBox="0 0 8 5"><path d="M0.8 0.8 L4 4 L7.2 0.8" fill="none" stroke="#b4b4b4" stroke-width="1.1"/></svg>
<svg style="left:859px;top:14.5px" width="8" height="5" viewBox="0 0 8 5"><path d="M0.8 0.8 L4 4 L7.2 0.8" fill="none" stroke="#b4b4b4" stroke-width="1.1"/></svg>
<div class="a" style="left:885px;top:8px;width:33.8px;height:18px;border-radius:4.5px;background:#5c5c5c;box-shadow:0 0.5px 1px rgba(0,0,0,.35);"></div>
<svg style="left:885px;top:8px" width="34" height="18" viewBox="0 0 34 18"><path transform="translate(7.4 3.2)" d="M0 0 V9.6 L2.3 7.5 L4 11.4 L5.6 10.7 L3.9 6.9 L6.9 6.7 Z" fill="#f4f4f4" stroke="#333" stroke-width="0.8" stroke-linejoin="round"/></svg>
<svg style="left:905.6px;top:14.5px" width="8" height="5" viewBox="0 0 8 5"><path d="M0.8 0.8 L4 4 L7.2 0.8" fill="none" stroke="#b4b4b4" stroke-width="1.1"/></svg>
<div class="a" style="left:1191px;top:7px;width:28.7px;height:18px;border-radius:4.5px;background:#5e5e5e;box-shadow:0 0.5px 1px rgba(0,0,0,.35);"></div>
<svg style="left:1191px;top:7px" width="29" height="18" viewBox="0 0 29 18"><g stroke="#f0f0f0" fill="none"><path d="M10.6 3.6 H18 M10.6 14 H18" stroke-width="1.4"/><path d="M14.3 5.8 V11.8 M12.6 7.4 L14.3 5.6 L16 7.4 M12.6 10.2 L14.3 12 L16 10.2" stroke-width="1"/></g></svg>
<div class="a" style="left:1227.6px;top:7.5px;width:66.2px;height:17px;border-radius:4.5px;background:#3d3d3d;box-shadow:0 0.5px 1px rgba(0,0,0,.35);"></div>
<svg style="left:1227.6px;top:7.5px" width="66" height="17" viewBox="0 0 66 17"><g stroke="#d8d8d8" fill="none" stroke-width="1.05"><path d="M9.4 4 V13 M7.2 6 L9.4 3.6 L11.6 6 M7.2 11 L9.4 13.4 L11.6 11"/></g><rect x="20.4" y="7.4" width="40.6" height="2.4" rx="1.2" fill="#2c2c2c"/><circle cx="33.8" cy="8.6" r="5.2" fill="#9c9c9c"/></svg>
<div class="a" style="left:185px;top:33px;width:1118px;height:1px;background:#3c3c3c;"></div>
<div class="a" style="left:185px;top:34px;width:174.5px;height:37px;background:#474747;"></div>
<svg style="left:191px;top:39px" width="30" height="25" viewBox="0 0 30 25">
<g stroke="#6c6c6c" stroke-width="0.7" fill="none"><path d="M3.8 4 V19.6 M1.2 22.2 L3.8 17.8 L6.4 22.2 M24.6 4 V19.6 M22 22.2 L24.6 17.8 L27.6 22.2 M21.6 6.4 V18 M8 14 L6.6 21.6 M20.4 12 L22.4 21.6"/></g>
<ellipse cx="6.7" cy="3.3" rx="4.8" ry="0.95" transform="rotate(9 6.7 3.3)" fill="#c9a236"/>
<ellipse cx="22.3" cy="3.3" rx="3.4" ry="0.8" transform="rotate(-4 22.3 3.3)" fill="#c9a236"/>
<ellipse cx="22.6" cy="6.6" rx="2.1" ry="0.6" fill="#b8922e"/>
<rect x="8.8" y="6" width="4.4" height="5" rx="0.9" fill="#dd8d3a"/><rect x="15" y="6.4" width="4.4" height="4.8" rx="0.9" fill="#dd8d3a"/>
<rect x="5.2" y="8.8" width="4.6" height="6.2" rx="0.9" fill="#dd8d3a"/><rect x="19.2" y="9.6" width="3.2" height="2.8" rx="0.7" fill="#d88a34"/>
<rect x="5.2" y="8.8" width="4.6" height="0.9" fill="#7a3a1c"/>
<circle cx="14.1" cy="16.7" r="4.9" fill="#a08466"/><circle cx="14.1" cy="16.3" r="4.5" fill="#8d8d8d"/><circle cx="14.1" cy="16.5" r="2.1" fill="#737373"/>
</svg>
<div class="t" style="top:41.65px;font-size:11.9px;color:#fff;left:233px;text-shadow:0 0 .4px #fff;">(Mapped Instr.)</div>
<div class="t" style="top:54.90px;font-size:10px;color:#b8b8b8;left:233px;">sur la piste (Map...</div>
<div class="a" style="left:322px;top:43.2px;width:28px;height:17.6px;border-radius:4.5px;background:#5c5c5c;box-shadow:0 0.5px 1px rgba(0,0,0,.35)"></div>
<svg style="left:322px;top:43.2px" width="28" height="18" viewBox="0 0 28 18"><g fill="none" stroke="#ececec" stroke-width="1.1"><rect x="7.6" y="4.2" width="12.8" height="9.4" rx="1.4"/><path d="M7.6 6.6 H20.4"/><path d="M14 7.8 V11.2 M12.4 9.8 L14 11.4 L15.6 9.8" stroke-width="1"/></g></svg>
<div class="a" style="left:359.5px;top:34px;width:25.5px;height:18.5px;background:#444444;"></div>
<div class="a" style="left:359.5px;top:52.5px;width:25.5px;height:18.5px;background:#393939;"></div>
<div class="a" style="left:359.5px;top:34px;width:1px;height:37px;background:#333333;"></div>
<div class="a" style="left:385px;top:34px;width:217.5px;height:18.5px;background:#595959;"></div>
<div class="a" style="left:385px;top:52.5px;width:217.5px;height:18.5px;background:#3f3f3f;"></div>
<div class="a" style="left:602.5px;top:34px;width:219px;height:18.5px;background:#3f3f3f;"></div>
<div class="a" style="left:602.5px;top:52.5px;width:219px;height:18.5px;background:#333333;"></div>
<div class="a" style="left:821.5px;top:34px;width:481.5px;height:18.5px;background:#262626;"></div>
<div class="a" style="left:821.5px;top:52.5px;width:481.5px;height:18.5px;background:#222222;"></div>
<div class="a" style="left:385px;top:52px;width:918px;height:1px;background:#2c2c2c;"></div>
<div class="a" style="left:602px;top:34px;width:1px;height:37px;background:#2e2e2e;"></div>
<svg style="left:376px;top:35px" width="9" height="12" viewBox="0 0 9 12"><path d="M0.6 0.4 L8 5.6 L0.6 10.8 Z" fill="#6c6c6c"/></svg>
<svg style="left:603px;top:35px" width="8" height="11" viewBox="0 0 8 11"><path d="M7.4 0.2 L0.4 5.4 L7.4 10.6 Z" fill="#6a6a6a"/></svg>
<div class="t" style="top:35.00px;font-size:11.4px;color:#e2e2e2;left:391px;text-shadow:0 0 .4px #e2e2e2;">35</div>
<div class="t" style="top:35.00px;font-size:11.4px;color:#8a8a8a;left:609.6px;">36</div>
<div class="t" style="top:35.00px;font-size:11.4px;color:#9a9a9a;left:825px;">37</div>
<div class="t" style="top:35.00px;font-size:11.4px;color:#9a9a9a;left:1042.6px;">38</div>
<div class="t" style="top:35.00px;font-size:11.4px;color:#9a9a9a;left:1261.2px;">39</div>
<div class="a" style="left:821px;top:36px;width:1px;height:35px;background:#5c5c5c;"></div>
<div class="a" style="left:1038.6px;top:36px;width:1px;height:35px;background:#5c5c5c;"></div>
<div class="a" style="left:1257.4px;top:36px;width:1px;height:35px;background:#5c5c5c;"></div>
<div class="a" style="left:432px;top:59px;width:1px;height:12px;background:#7c7c7c;"></div>
<div class="a" style="left:476px;top:59px;width:1px;height:12px;background:#7c7c7c;"></div>
<div class="a" style="left:540px;top:59px;width:1px;height:12px;background:#7c7c7c;"></div>
<div class="a" style="left:656px;top:59px;width:1px;height:12px;background:#6a6a6a;"></div>
<div class="a" style="left:712px;top:59px;width:1px;height:12px;background:#6a6a6a;"></div>
<div class="a" style="left:766px;top:59px;width:1px;height:12px;background:#6a6a6a;"></div>
<div class="a" style="left:876px;top:59px;width:1px;height:12px;background:#6a6a6a;"></div>
<div class="a" style="left:930px;top:59px;width:1px;height:12px;background:#6a6a6a;"></div>
<div class="a" style="left:984px;top:59px;width:1px;height:12px;background:#6a6a6a;"></div>
<div class="a" style="left:1093px;top:59px;width:1px;height:12px;background:#6a6a6a;"></div>
<div class="a" style="left:1148px;top:59px;width:1px;height:12px;background:#6a6a6a;"></div>
<div class="a" style="left:1202px;top:59px;width:1px;height:12px;background:#6a6a6a;"></div>
<div class="a" style="left:385px;top:53px;width:0;height:18px;border-left:1px dotted #8a8a8a"></div>
<div class="a" style="left:185px;top:144.5px;width:175px;height:1px;background:#6e6f69;"></div>
<div class="a" style="left:359.1px;top:71px;width:1.5px;height:705px;background:#8a8b85;"></div>
<div class="a" style="left:185px;top:776px;width:1118px;height:12.5px;background:#373737;"></div>
<div class="a" style="left:359.5px;top:776px;width:1px;height:12.5px;background:#2e2e2e;"></div>
<div class="a" style="left:377.4px;top:71px;width:226px;height:74.2px;border-radius:5px;background:#fffff2"></div>
<svg style="left:0;top:0" width="1303" height="790" viewBox="0 0 1303 790"><rect x="326" y="96.95" width="33.6" height="1.1" fill="#000"/><rect x="359.6" y="96.95" width="18" height="1.1" fill="#000" opacity="0.42"/><rect x="377.4" y="96.95" width="226" height="1.1" fill="#000"/><rect x="326" y="103.95" width="33.6" height="1.1" fill="#000"/><rect x="359.6" y="103.95" width="18" height="1.1" fill="#000" opacity="0.42"/><rect x="377.4" y="103.95" width="226" height="1.1" fill="#000"/><rect x="326" y="110.95" width="33.6" height="1.1" fill="#000"/><rect x="359.6" y="110.95" width="18" height="1.1" fill="#000" opacity="0.42"/><rect x="377.4" y="110.95" width="226" height="1.1" fill="#000"/><rect x="326" y="117.95" width="33.6" height="1.1" fill="#000"/><rect x="359.6" y="117.95" width="18" height="1.1" fill="#000" opacity="0.42"/><rect x="377.4" y="117.95" width="226" height="1.1" fill="#000"/><rect x="326" y="124.95" width="33.6" height="1.1" fill="#000"/><rect x="359.6" y="124.95" width="18" height="1.1" fill="#000" opacity="0.42"/><rect x="377.4" y="124.95" width="226" height="1.1" fill="#000"/><rect x="325.6" y="97" width="1" height="29" fill="#000"/><rect x="377.2" y="97" width="1.1" height="29" fill="#000"/><rect x="602.6" y="97" width="1.1" height="29" fill="#000"/><rect x="332.6" y="104.6" width="3" height="13.8" fill="#000"/><rect x="337.8" y="104.6" width="3" height="13.8" fill="#000"/><text x="345" y="110.9" font-family="'Liberation Serif','DejaVu Serif',serif" font-weight="bold" font-size="18.3" fill="#000">4</text><text x="345" y="124.9" font-family="'Liberation Serif','DejaVu Serif',serif" font-weight="bold" font-size="18.3" fill="#000">4</text><path d="M385.9 94.4 L392.1 100.6 M392.1 94.4 L385.9 100.6" stroke="#000" stroke-width="1.15" fill="none"/><rect x="392.1" y="71.6" width="1.1" height="23.6" fill="#000"/><path d="M405.9 94.4 L412.1 100.6 M412.1 94.4 L405.9 100.6" stroke="#000" stroke-width="1.15" fill="none"/><rect x="412.1" y="71.6" width="1.1" height="23.6" fill="#000"/><path d="M433.7 94.4 L439.90000000000003 100.6 M439.90000000000003 94.4 L433.7 100.6" stroke="#000" stroke-width="1.15" fill="none"/><rect x="439.90000000000003" y="71.6" width="1.1" height="23.6" fill="#000"/><path d="M453.7 94.4 L459.90000000000003 100.6 M459.90000000000003 94.4 L453.7 100.6" stroke="#000" stroke-width="1.15" fill="none"/><rect x="459.90000000000003" y="71.6" width="1.1" height="23.6" fill="#000"/><path d="M478.9 94.4 L485.1 100.6 M485.1 94.4 L478.9 100.6" stroke="#000" stroke-width="1.15" fill="none"/><rect x="485.1" y="71.6" width="1.1" height="23.6" fill="#000"/><path d="M506.9 94.4 L513.1 100.6 M513.1 94.4 L506.9 100.6" stroke="#000" stroke-width="1.15" fill="none"/><rect x="513.1" y="71.6" width="1.1" height="23.6" fill="#000"/><path d="M542.4 94.4 L548.6 100.6 M548.6 94.4 L542.4 100.6" stroke="#000" stroke-width="1.15" fill="none"/><rect x="548.6" y="71.6" width="1.1" height="23.6" fill="#000"/><path d="M561.6 94.4 L567.8000000000001 100.6 M567.8000000000001 94.4 L561.6 100.6" stroke="#000" stroke-width="1.15" fill="none"/><rect x="567.8000000000001" y="71.6" width="1.1" height="23.6" fill="#000"/><path d="M580.4 94.9 L585.6 100.1 M585.6 94.9 L580.4 100.1" stroke="#000" stroke-width="1.15" fill="none"/><circle cx="583" cy="97.5" r="3.7" fill="none" stroke="#000" stroke-width="0.85"/><rect x="586.1" y="71.6" width="1.1" height="23" fill="#000"/><rect x="392.1" y="71" width="68.8" height="2.4" fill="#000"/><rect x="485.1" y="71" width="28.9" height="2.4" fill="#000"/><rect x="548.6" y="72.6" width="20.2" height="4.2" fill="#000"/><path d="M384.6 124.6 L394.40000000000003 116.4 V123 L384.6 131 Z" fill="#000"/><path d="M413 124.6 L422.8 116.4 V123 L413 131 Z" fill="#000"/><path d="M496.6 124.6 L506.40000000000003 116.4 V123 L496.6 131 Z" fill="#000"/><path d="M522 124.6 L531.8 116.4 V123 L522 131 Z" fill="#000"/><circle cx="396.8" cy="120.4" r="1.4" fill="#000"/><rect x="384.6" y="126" width="1.1" height="29" fill="#000"/><rect x="413" y="126" width="1.1" height="29" fill="#000"/><rect x="384.6" y="151" width="29.3" height="4.2" fill="#000"/><rect x="403.6" y="146" width="10.3" height="3.6" fill="#000"/><rect x="496.6" y="126" width="1.1" height="29" fill="#000"/><rect x="522" y="126" width="1.1" height="29" fill="#000"/><rect x="496.6" y="151" width="26.3" height="4.2" fill="#000"/><rect x="512.8" y="146" width="10.1" height="3.6" fill="#000"/><path d="M433.4 113.4 L439.5 107 L445.59999999999997 113.4 Z" fill="none" stroke="#000" stroke-width="1.15" stroke-linejoin="miter"/><path d="M461.6 113.4 L467.70000000000005 107 L473.8 113.4 Z" fill="none" stroke="#000" stroke-width="1.15" stroke-linejoin="miter"/><path d="M541.8 113.4 L547.9 107 L554.0 113.4 Z" fill="none" stroke="#000" stroke-width="1.15" stroke-linejoin="miter"/><circle cx="444.8" cy="106.2" r="1.4" fill="#000"/><rect x="432.9" y="113" width="1.1" height="28.8" fill="#000"/><rect x="461.1" y="113" width="1.1" height="28.8" fill="#000"/><rect x="432.9" y="138" width="29.1" height="3.9" fill="#000"/><rect x="451.8" y="132.2" width="10.2" height="3.6" fill="#000"/><rect x="540.8" y="113" width="1.1" height="22" fill="#000"/><g fill="none" stroke="#000"><path d="M490.6 118.6 L484.6 137" stroke-width="1.2"/><path d="M481 120.6 C483 122.6 487 122.2 489.8 119.6 M479.8 127 C482 129.2 486 128.6 487.8 126.2" stroke-width="1.3"/></g><circle cx="481.6" cy="120" r="1.8" fill="#000"/><circle cx="480.2" cy="126.6" r="1.8" fill="#000"/></svg>
<div class="a" id="win1" style="left:360px;top:173.3px;width:776.8px;height:182.4px;border-radius:9px 9px 4px 4px;background:#474747;overflow:hidden;box-shadow:0 0 0 0.7px rgba(0,0,0,.6), 0 6px 18px rgba(0,0,0,.25)">
<div class="a" style="left:0.5px;top:0.2px;width:777px;height:24px;background:#a9a9a9;"></div>
<div class="a" style="left:0.5px;top:0.2px;width:777px;height:1px;background:#c4c4c4;"></div>
<div class="a" style="left:0.5px;top:24.0px;width:777px;height:0.7px;background:#2c2c2c;"></div>
<div class="a" style="left:5.850000000000023px;top:6.75px;width:10.5px;height:10.5px;border-radius:50%;background:#fe5f57;box-shadow:inset 0 0 0 0.5px #e0443e"></div>
<div class="a" style="left:23.25px;top:6.75px;width:10.5px;height:10.5px;border-radius:50%;background:#febc2e;box-shadow:inset 0 0 0 0.5px #dea123"></div>
<div class="a" style="left:40.75px;top:6.75px;width:10.5px;height:10.5px;border-radius:50%;background:#28c840;box-shadow:inset 0 0 0 0.5px #1dad2b"></div>
<div class="a" style="left:9.400000000000023px;top:10.3px;width:3.4px;height:3.4px;border-radius:50%;background:#6b1a13"></div>
<div class="a" style="left:293.4px;top:6.299999999999983px;width:9.6px;height:11px;border-radius:1.6px;background:#efefef;box-shadow:0 0 0 0.5px #bdbdbd"><div class="a" style="left:2.6px;top:3.2px;width:4.4px;height:4.4px;border-radius:50%;border:0.9px solid #8d8d8d"></div></div>
<div class="t" style="top:6.05px;font-size:11.9px;color:#3c3c3c;font-weight:bold;left:309.6px;">scoresong - Instrument Mappé</div>
<div class="a" style="left:10px;top:37.0px;width:72px;height:17.8px;border-radius:4.5px;background:#5c5c5c;box-shadow:0 0.5px 1px rgba(0,0,0,.35)"></div>
<div class="t" style="top:39.90px;font-size:12px;color:#fff;left:18.2px;text-shadow:0 0 .4px #fff;">Initialiser</div>
<svg style="left:69.60000000000002px;top:43.29999999999998px" width="8" height="5" viewBox="0 0 8 5"><path d="M0.8 0.8 L4 4 L7.2 0.8" fill="none" stroke="#b4b4b4" stroke-width="1.1"/></svg>
<div class="a" style="left:0.5px;top:65.7px;width:777px;height:1px;background:#1c1c1c;"></div>
<div class="a" style="left:0.5px;top:66.7px;width:777px;height:103px;background:#343434;"></div>
<div class="a" style="left:57px;top:90.7px;width:706px;height:14px;background:#393939;"></div>
<div class="a" style="left:57px;top:118.7px;width:706px;height:14px;background:#393939;"></div>
<div class="a" style="left:57px;top:146.7px;width:706px;height:14px;background:#393939;"></div>
<div class="a" style="left:0;top:66.69999999999999px;width:56px;height:103px;background:linear-gradient(90deg,#e6e6e6 0%,#e0e0e0 65%,#d2d2d2 100%)"></div>
<div class="a" style="left:36px;top:99.6px;width:21px;height:1px;background:#555;"></div>
<div class="a" style="left:36px;top:123.8px;width:21px;height:1px;background:#555;"></div>
<div class="a" style="left:36px;top:148.6px;width:21px;height:1px;background:#555;"></div>
<div class="a" style="left:1px;top:76.3px;width:56px;height:1px;background:#666;"></div>
<div class="a" style="left:0;top:89.89999999999998px;width:35.6px;height:14px;border-radius:0 2.5px 2.5px 0;background:#222"></div>
<div class="a" style="left:0;top:117.69999999999999px;width:35.6px;height:14px;border-radius:0 2.5px 2.5px 0;background:#222"></div>
<div class="a" style="left:0;top:145.89999999999998px;width:35.6px;height:14px;border-radius:0 2.5px 2.5px 0;background:#222"></div>
<div class="a" style="left:56.5px;top:66.7px;width:1px;height:103px;background:#2b2b2b;"></div>
<div class="a" style="left:123.5px;top:66.7px;width:1px;height:103px;background:#2b2b2b;"></div>
<div class="a" style="left:227.1px;top:66.7px;width:1px;height:103px;background:#2b2b2b;"></div>
<div class="a" style="left:330.5px;top:66.7px;width:1px;height:103px;background:#2b2b2b;"></div>
<div class="a" style="left:408.5px;top:66.7px;width:1px;height:103px;background:#2b2b2b;"></div>
<div class="a" style="left:477.3px;top:66.7px;width:1px;height:103px;background:#2b2b2b;"></div>
<div class="a" style="left:520.5px;top:66.7px;width:1px;height:103px;background:#2b2b2b;"></div>
<div class="a" style="left:571.3px;top:66.7px;width:1px;height:103px;background:#2b2b2b;"></div>
<div class="a" style="left:762.5px;top:66.7px;width:1px;height:103px;background:#2b2b2b;"></div>
<div class="a" style="left:763.5px;top:66.7px;width:13.5px;height:103px;background:#363636;"></div>
<div class="t" style="top:80.20px;font-size:10.2px;color:#e6e6e6;left:62px;">B6</div>
<div class="t" style="top:80.20px;font-size:10.2px;color:#e6e6e6;left:127.2px;">B6</div>
<div class="a" style="left:158.4px;top:79.7px;width:61.6px;height:8.2px;background:#2e2e2e;"></div>
<div class="a" style="left:158.4px;top:79.7px;width:52.6px;height:8.2px;background:#3b6ea8;"></div>
<div class="t" style="top:80.20px;font-size:10.2px;color:#e6e6e6;left:256px;">0</div>
<div class="a" style="left:262px;top:79.7px;width:62px;height:8.2px;background:#2e2e2e;"></div>
<div class="a" style="left:262px;top:79.7px;width:31.4px;height:8.2px;background:#3b6ea8;"></div>
<div class="t" style="top:80.20px;font-size:10.2px;color:#e6e6e6;left:334.2px;">Base</div>
<svg style="left:398.6px;top:79.5px" width="6" height="9" viewBox="0 0 6 9"><path d="M1 3.5 L3 1.6 L5 3.5 M1 5.5 L3 7.4 L5 5.5" fill="none" stroke="#dadada" stroke-width="1.15"/></svg>
<div class="t" style="top:80.20px;font-size:10.2px;color:#e6e6e6;left:422.6px;">1</div>
<div class="a" style="left:482px;top:79.79999999999998px;width:10.6px;height:7.4px;border-radius:50%;background:#d2d2d2;transform:rotate(-22deg)"></div>
<svg style="left:509.20000000000005px;top:79.5px" width="6" height="9" viewBox="0 0 6 9"><path d="M1 3.5 L3 1.6 L5 3.5 M1 5.5 L3 7.4 L5 5.5" fill="none" stroke="#dadada" stroke-width="1.15"/></svg>
<div class="t" style="top:79.60px;font-size:10.2px;color:#c8c8c8;letter-spacing:0.4px;left:578.6px;">---</div>
<svg style="left:756.4000000000001px;top:79.5px" width="6" height="9" viewBox="0 0 6 9"><path d="M1 3.5 L3 1.6 L5 3.5 M1 5.5 L3 7.4 L5 5.5" fill="none" stroke="#dadada" stroke-width="1.15"/></svg>
<div class="t" style="top:94.20px;font-size:10.2px;color:#e6e6e6;left:62px;">A#6</div>
<div class="t" style="top:94.20px;font-size:10.2px;color:#e6e6e6;left:127.2px;">A#6</div>
<div class="a" style="left:158.4px;top:93.7px;width:61.6px;height:8.2px;background:#2e2e2e;"></div>
<div class="a" style="left:158.4px;top:93.7px;width:52.6px;height:8.2px;background:#3b6ea8;"></div>
<div class="t" style="top:94.20px;font-size:10.2px;color:#e6e6e6;left:256px;">0</div>
<div class="a" style="left:262px;top:93.7px;width:62px;height:8.2px;background:#2e2e2e;"></div>
<div class="a" style="left:262px;top:93.7px;width:31.4px;height:8.2px;background:#3b6ea8;"></div>
<div class="t" style="top:94.20px;font-size:10.2px;color:#e6e6e6;left:334.2px;">Base</div>
<svg style="left:398.6px;top:93.5px" width="6" height="9" viewBox="0 0 6 9"><path d="M1 3.5 L3 1.6 L5 3.5 M1 5.5 L3 7.4 L5 5.5" fill="none" stroke="#dadada" stroke-width="1.15"/></svg>
<div class="t" style="top:94.20px;font-size:10.2px;color:#e6e6e6;left:422.6px;">1</div>
<div class="a" style="left:482px;top:93.80000000000001px;width:10.6px;height:7.4px;border-radius:50%;background:#d2d2d2;transform:rotate(-22deg)"></div>
<svg style="left:509.20000000000005px;top:93.5px" width="6" height="9" viewBox="0 0 6 9"><path d="M1 3.5 L3 1.6 L5 3.5 M1 5.5 L3 7.4 L5 5.5" fill="none" stroke="#dadada" stroke-width="1.15"/></svg>
<div class="t" style="top:93.60px;font-size:10.2px;color:#c8c8c8;letter-spacing:0.4px;left:578.6px;">---</div>
<svg style="left:756.4000000000001px;top:93.5px" width="6" height="9" viewBox="0 0 6 9"><path d="M1 3.5 L3 1.6 L5 3.5 M1 5.5 L3 7.4 L5 5.5" fill="none" stroke="#dadada" stroke-width="1.15"/></svg>
<div class="t" style="top:108.20px;font-size:10.2px;color:#e6e6e6;left:62px;">A6</div>
<div class="t" style="top:108.20px;font-size:10.2px;color:#e6e6e6;left:127.2px;">A6</div>
<div class="a" style="left:158.4px;top:107.7px;width:61.6px;height:8.2px;background:#2e2e2e;"></div>
<div class="a" style="left:158.4px;top:107.7px;width:52px;height:8.2px;background:#3b6ea8;"></div>
<div class="t" style="top:108.20px;font-size:10.2px;color:#e6e6e6;left:256px;">0</div>
<div class="a" style="left:262px;top:107.7px;width:62px;height:8.2px;background:#2e2e2e;"></div>
<div class="a" style="left:262px;top:107.7px;width:31.4px;height:8.2px;background:#3b6ea8;"></div>
<div class="t" style="top:108.20px;font-size:10.2px;color:#e6e6e6;left:334.2px;">Base</div>
<svg style="left:398.6px;top:107.5px" width="6" height="9" viewBox="0 0 6 9"><path d="M1 3.5 L3 1.6 L5 3.5 M1 5.5 L3 7.4 L5 5.5" fill="none" stroke="#dadada" stroke-width="1.15"/></svg>
<div class="t" style="top:108.20px;font-size:10.2px;color:#e6e6e6;left:422.6px;">1</div>
<div class="a" style="left:482px;top:107.80000000000001px;width:10.6px;height:7.4px;border-radius:50%;background:#d2d2d2;transform:rotate(-22deg)"></div>
<svg style="left:509.20000000000005px;top:107.5px" width="6" height="9" viewBox="0 0 6 9"><path d="M1 3.5 L3 1.6 L5 3.5 M1 5.5 L3 7.4 L5 5.5" fill="none" stroke="#dadada" stroke-width="1.15"/></svg>
<div class="t" style="top:107.60px;font-size:10.2px;color:#c8c8c8;letter-spacing:0.4px;left:578.6px;">---</div>
<svg style="left:756.4000000000001px;top:107.5px" width="6" height="9" viewBox="0 0 6 9"><path d="M1 3.5 L3 1.6 L5 3.5 M1 5.5 L3 7.4 L5 5.5" fill="none" stroke="#dadada" stroke-width="1.15"/></svg>
<div class="t" style="top:122.20px;font-size:10.2px;color:#e6e6e6;left:62px;">G#6</div>
<div class="t" style="top:122.20px;font-size:10.2px;color:#e6e6e6;left:127.2px;">G#6</div>
<div class="a" style="left:158.4px;top:121.7px;width:61.6px;height:8.2px;background:#2e2e2e;"></div>
<div class="a" style="left:158.4px;top:121.7px;width:51.2px;height:8.2px;background:#3b6ea8;"></div>
<div class="t" style="top:122.20px;font-size:10.2px;color:#e6e6e6;left:256px;">0</div>
<div class="a" style="left:262px;top:121.7px;width:62px;height:8.2px;background:#2e2e2e;"></div>
<div class="a" style="left:262px;top:121.7px;width:31.4px;height:8.2px;background:#3b6ea8;"></div>
<div class="t" style="top:122.20px;font-size:10.2px;color:#e6e6e6;left:334.2px;">Base</div>
<svg style="left:398.6px;top:121.5px" width="6" height="9" viewBox="0 0 6 9"><path d="M1 3.5 L3 1.6 L5 3.5 M1 5.5 L3 7.4 L5 5.5" fill="none" stroke="#dadada" stroke-width="1.15"/></svg>
<div class="t" style="top:122.20px;font-size:10.2px;color:#e6e6e6;left:422.6px;">1</div>
<div class="a" style="left:482px;top:121.80000000000001px;width:10.6px;height:7.4px;border-radius:50%;background:#d2d2d2;transform:rotate(-22deg)"></div>
<svg style="left:509.20000000000005px;top:121.5px" width="6" height="9" viewBox="0 0 6 9"><path d="M1 3.5 L3 1.6 L5 3.5 M1 5.5 L3 7.4 L5 5.5" fill="none" stroke="#dadada" stroke-width="1.15"/></svg>
<div class="t" style="top:121.60px;font-size:10.2px;color:#c8c8c8;letter-spacing:0.4px;left:578.6px;">---</div>
<svg style="left:756.4000000000001px;top:121.5px" width="6" height="9" viewBox="0 0 6 9"><path d="M1 3.5 L3 1.6 L5 3.5 M1 5.5 L3 7.4 L5 5.5" fill="none" stroke="#dadada" stroke-width="1.15"/></svg>
<div class="t" style="top:136.20px;font-size:10.2px;color:#e6e6e6;left:62px;">G6</div>
<div class="t" style="top:136.20px;font-size:10.2px;color:#e6e6e6;left:127.2px;">G6</div>
<div class="a" style="left:158.4px;top:135.7px;width:61.6px;height:8.2px;background:#2e2e2e;"></div>
<div class="a" style="left:158.4px;top:135.7px;width:51.2px;height:8.2px;background:#3b6ea8;"></div>
<div class="t" style="top:136.20px;font-size:10.2px;color:#e6e6e6;left:256px;">0</div>
<div class="a" style="left:262px;top:135.7px;width:62px;height:8.2px;background:#2e2e2e;"></div>
<div class="a" style="left:262px;top:135.7px;width:31.4px;height:8.2px;background:#3b6ea8;"></div>
<div class="t" style="top:136.20px;font-size:10.2px;color:#e6e6e6;left:334.2px;">Base</div>
<svg style="left:398.6px;top:135.5px" width="6" height="9" viewBox="0 0 6 9"><path d="M1 3.5 L3 1.6 L5 3.5 M1 5.5 L3 7.4 L5 5.5" fill="none" stroke="#dadada" stroke-width="1.15"/></svg>
<div class="t" style="top:136.20px;font-size:10.2px;color:#e6e6e6;left:422.6px;">1</div>
<div class="a" style="left:482px;top:135.8px;width:10.6px;height:7.4px;border-radius:50%;background:#d2d2d2;transform:rotate(-22deg)"></div>
<svg style="left:509.20000000000005px;top:135.5px" width="6" height="9" viewBox="0 0 6 9"><path d="M1 3.5 L3 1.6 L5 3.5 M1 5.5 L3 7.4 L5 5.5" fill="none" stroke="#dadada" stroke-width="1.15"/></svg>
<div class="t" style="top:135.60px;font-size:10.2px;color:#c8c8c8;letter-spacing:0.4px;left:578.6px;">---</div>
<svg style="left:756.4000000000001px;top:135.5px" width="6" height="9" viewBox="0 0 6 9"><path d="M1 3.5 L3 1.6 L5 3.5 M1 5.5 L3 7.4 L5 5.5" fill="none" stroke="#dadada" stroke-width="1.15"/></svg>
<div class="t" style="top:150.20px;font-size:10.2px;color:#e6e6e6;left:62px;">F#6</div>
<div class="t" style="top:150.20px;font-size:10.2px;color:#e6e6e6;left:127.2px;">F#6</div>
<div class="a" style="left:158.4px;top:149.7px;width:61.6px;height:8.2px;background:#2e2e2e;"></div>
<div class="a" style="left:158.4px;top:149.7px;width:50.4px;height:8.2px;background:#3b6ea8;"></div>
<div class="t" style="top:150.20px;font-size:10.2px;color:#e6e6e6;left:256px;">0</div>
<div class="a" style="left:262px;top:149.7px;width:62px;height:8.2px;background:#2e2e2e;"></div>
<div class="a" style="left:262px;top:149.7px;width:31.4px;height:8.2px;background:#3b6ea8;"></div>
<div class="t" style="top:150.20px;font-size:10.2px;color:#e6e6e6;left:334.2px;">Base</div>
<svg style="left:398.6px;top:149.5px" width="6" height="9" viewBox="0 0 6 9"><path d="M1 3.5 L3 1.6 L5 3.5 M1 5.5 L3 7.4 L5 5.5" fill="none" stroke="#dadada" stroke-width="1.15"/></svg>
<div class="t" style="top:150.20px;font-size:10.2px;color:#e6e6e6;left:422.6px;">1</div>
<div class="a" style="left:482px;top:149.8px;width:10.6px;height:7.4px;border-radius:50%;background:#d2d2d2;transform:rotate(-22deg)"></div>
<svg style="left:509.20000000000005px;top:149.5px" width="6" height="9" viewBox="0 0 6 9"><path d="M1 3.5 L3 1.6 L5 3.5 M1 5.5 L3 7.4 L5 5.5" fill="none" stroke="#dadada" stroke-width="1.15"/></svg>
<div class="t" style="top:149.60px;font-size:10.2px;color:#c8c8c8;letter-spacing:0.4px;left:578.6px;">---</div>
<svg style="left:756.4000000000001px;top:149.5px" width="6" height="9" viewBox="0 0 6 9"><path d="M1 3.5 L3 1.6 L5 3.5 M1 5.5 L3 7.4 L5 5.5" fill="none" stroke="#dadada" stroke-width="1.15"/></svg>
<div class="t" style="top:164.20px;font-size:10.2px;color:#e6e6e6;left:62px;">F6</div>
<div class="t" style="top:164.20px;font-size:10.2px;color:#e6e6e6;left:127.2px;">F6</div>
<div class="a" style="left:158.4px;top:163.7px;width:61.6px;height:8.2px;background:#2e2e2e;"></div>
<div class="a" style="left:158.4px;top:163.7px;width:50.4px;height:8.2px;background:#3b6ea8;"></div>
<div class="t" style="top:164.20px;font-size:10.2px;color:#e6e6e6;left:256px;">0</div>
<div class="a" style="left:262px;top:163.7px;width:62px;height:8.2px;background:#2e2e2e;"></div>
<div class="a" style="left:262px;top:163.7px;width:31.4px;height:8.2px;background:#3b6ea8;"></div>
<div class="t" style="top:164.20px;font-size:10.2px;color:#e6e6e6;left:334.2px;">Base</div>
<svg style="left:398.6px;top:163.5px" width="6" height="9" viewBox="0 0 6 9"><path d="M1 3.5 L3 1.6 L5 3.5 M1 5.5 L3 7.4 L5 5.5" fill="none" stroke="#dadada" stroke-width="1.15"/></svg>
<div class="t" style="top:164.20px;font-size:10.2px;color:#e6e6e6;left:422.6px;">1</div>
<div class="a" style="left:482px;top:163.8px;width:10.6px;height:7.4px;border-radius:50%;background:#d2d2d2;transform:rotate(-22deg)"></div>
<svg style="left:509.20000000000005px;top:163.5px" width="6" height="9" viewBox="0 0 6 9"><path d="M1 3.5 L3 1.6 L5 3.5 M1 5.5 L3 7.4 L5 5.5" fill="none" stroke="#dadada" stroke-width="1.15"/></svg>
<div class="t" style="top:163.60px;font-size:10.2px;color:#c8c8c8;letter-spacing:0.4px;left:578.6px;">---</div>
<svg style="left:756.4000000000001px;top:163.5px" width="6" height="9" viewBox="0 0 6 9"><path d="M1 3.5 L3 1.6 L5 3.5 M1 5.5 L3 7.4 L5 5.5" fill="none" stroke="#dadada" stroke-width="1.15"/></svg>
<div class="a" style="left:0.5px;top:66.7px;width:777px;height:18.4px;background:#4a4a4a;"></div>
<div class="a" style="left:0.5px;top:84.9px;width:777px;height:0.8px;background:#2e2e2e;"></div>
<div class="a" style="left:56.5px;top:66.7px;width:1px;height:18.4px;background:#3a3a3a;"></div>
<div class="a" style="left:123.5px;top:66.7px;width:1px;height:18.4px;background:#3a3a3a;"></div>
<div class="a" style="left:227.1px;top:66.7px;width:1px;height:18.4px;background:#3a3a3a;"></div>
<div class="a" style="left:330.5px;top:66.7px;width:1px;height:18.4px;background:#3a3a3a;"></div>
<div class="a" style="left:408.5px;top:66.7px;width:1px;height:18.4px;background:#3a3a3a;"></div>
<div class="a" style="left:477.3px;top:66.7px;width:1px;height:18.4px;background:#3a3a3a;"></div>
<div class="a" style="left:520.5px;top:66.7px;width:1px;height:18.4px;background:#3a3a3a;"></div>
<div class="a" style="left:571.3px;top:66.7px;width:1px;height:18.4px;background:#3a3a3a;"></div>
<div class="a" style="left:762.5px;top:66.7px;width:1px;height:18.4px;background:#3a3a3a;"></div>
<div class="a" style="left:763.5px;top:66.7px;width:13.5px;height:18.4px;background:#363636;"></div>
<div class="t" style="top:72.95px;font-size:10.1px;color:#f0f0f0;left:62.6px;">Nom entrée</div>
<div class="t" style="top:72.95px;font-size:10.1px;color:#f0f0f0;left:129.6px;">Note de sortie</div>
<div class="t" style="top:72.95px;font-size:10.1px;color:#f0f0f0;left:233px;">Vélocité</div>
<div class="t" style="top:72.95px;font-size:10.1px;color:#f0f0f0;left:336.8px;">Canal</div>
<div class="t" style="top:72.95px;font-size:10.1px;color:#f0f0f0;left:414.2px;">Câble</div>
<div class="t" style="top:72.95px;font-size:10.1px;color:#f0f0f0;left:483.2px;">Tête</div>
<div class="t" style="top:72.95px;font-size:10.1px;color:#f0f0f0;left:526.2px;">Pos. rel.</div>
<div class="t" style="top:72.95px;font-size:10.1px;color:#f0f0f0;left:577.4px;">Groupe</div>
<div class="a" style="left:766.5999999999999px;top:97.69999999999999px;width:6.4px;height:16.4px;border-radius:3.2px;background:#828282"></div>
<div class="a" style="left:0.5px;top:169.3px;width:777px;height:13px;background:#3d3d3d;"></div>
<div class="a" style="left:0.5px;top:169.3px;width:777px;height:0.8px;background:#2a2a2a;"></div>
<div class="a" style="left:123.5px;top:169.3px;width:1px;height:13px;background:#2a2a2a;"></div>
<div class="a" style="left:763.5px;top:170.1px;width:13.5px;height:12.6px;background:#2f2f31;"></div>
</div>
<div class="a" id="win2" style="left:360.2px;top:355.8px;width:809px;height:378px;border-radius:9px;background:#fff;overflow:hidden;box-shadow:0 0 0 0.5px rgba(0,0,0,.25), 0 10px 32px rgba(0,0,0,.30), 0 1px 5px rgba(0,0,0,.12)">
<div class="a" style="left:0;top:0;width:809px;height:24.6px;background:linear-gradient(#d9d9d9,#f0f0f0)"></div>
<div class="a" style="left:0;top:24.6px;width:809px;height:52px;background:linear-gradient(#f5f5f5,#ebebeb)"></div>
<div class="a" style="left:0.0px;top:24.4px;width:809px;height:0.8px;background:#dedede;"></div>
<div class="a" style="left:0.0px;top:76.4px;width:809px;height:1px;background:#c6c6c6;"></div>
<div class="a" style="left:6.550000000000011px;top:7.349999999999966px;width:10.5px;height:10.5px;border-radius:50%;background:#d4d4d4;box-shadow:inset 0 0 0 0.6px #c2c2c2"></div>
<div class="a" style="left:24.05000000000001px;top:7.349999999999966px;width:10.5px;height:10.5px;border-radius:50%;background:#d4d4d4;box-shadow:inset 0 0 0 0.6px #c2c2c2"></div>
<div class="a" style="left:41.55000000000001px;top:7.349999999999966px;width:10.5px;height:10.5px;border-radius:50%;background:#d4d4d4;box-shadow:inset 0 0 0 0.6px #c2c2c2"></div>
<div class="a" style="left:10.200000000000012px;top:10.999999999999966px;width:3.2px;height:3.2px;border-radius:50%;background:#5a5a5a"></div>
<div class="a" style="left:316.2px;top:7.0px;width:8.6px;height:10px;border-radius:1.6px;background:#f4f4f4;box-shadow:0 0 0 0.5px #cfcfcf"><div class="a" style="left:2.4px;top:3px;width:3.8px;height:3.8px;border-radius:50%;border:0.8px solid #bdbdbd"></div></div>
<div class="t" style="top:6.47px;font-size:11.85px;color:#a6a6a6;font-weight:bold;left:331.0px;">scoresong - Styles de portée</div>
<div class="a" style="left:17.100000000000023px;top:41.80000000000001px;width:28px;height:18px;border-radius:5px;background:#e5e5e5;box-shadow:0 0 0 0.5px #d6d6d6"></div>
<svg style="left:17.100000000000023px;top:41.80000000000001px" width="28" height="18" viewBox="0 0 28 18"><g fill="none" stroke="#2a2a2a" stroke-width="1.05"><rect x="-4.1" y="-2.5" width="8.2" height="5" rx="2.5" transform="translate(11.7 10.6) rotate(-42)"/><rect x="-4.1" y="-2.5" width="8.2" height="5" rx="2.5" transform="translate(16.1 7.2) rotate(-42)"/></g></svg>
<div class="a" style="left:52.400000000000034px;top:42.19999999999999px;width:68.4px;height:17.6px;border-radius:5px;background:#fff;box-shadow:0 0 0 0.5px #dadada, 0 0.5px 1.5px rgba(0,0,0,.18)"></div>
<div class="t" style="top:45.50px;font-size:11.8px;color:#262626;left:59.0px;">Nouveau</div>
<svg style="left:109.19999999999999px;top:49.19999999999999px" width="7" height="5" viewBox="0 0 7 5"><path d="M0.8 0.9 L3.5 3.8 L6.2 0.9" fill="none" stroke="#2a2a2a" stroke-width="1.4" stroke-linecap="round" stroke-linejoin="round"/></svg>
<div class="a" style="left:128.0px;top:42.19999999999999px;width:59px;height:17.6px;border-radius:5px;background:#fff;box-shadow:0 0 0 0.5px #dadada, 0 0.5px 1.5px rgba(0,0,0,.18)"></div>
<div class="t" style="top:45.50px;font-size:11.8px;color:#262626;left:134.8px;">Édition</div>
<svg style="left:175.40000000000003px;top:49.19999999999999px" width="7" height="5" viewBox="0 0 7 5"><path d="M0.8 0.9 L3.5 3.8 L6.2 0.9" fill="none" stroke="#2a2a2a" stroke-width="1.4" stroke-linecap="round" stroke-linejoin="round"/></svg>
<div class="a" style="left:693.5px;top:41.80000000000001px;width:98px;height:18px;border-radius:5px;background:#e4e4e4;box-shadow:0 0 0 0.5px #dadada"></div>
<div class="a" style="left:694.0999999999999px;top:42.19999999999999px;width:32px;height:17.2px;border-radius:4.5px;background:#fff;box-shadow:0 0.5px 1.5px rgba(0,0,0,.22)"></div>
<div class="a" style="left:759.0px;top:46.2px;width:0.8px;height:9.4px;background:#d0d0d0;"></div>
<svg style="left:-360.2px;top:-355.8px" width="1303" height="790" viewBox="0 0 1303 790"><rect x="1063.8999999999999" y="402.6" width="11.8" height="8.6" rx="1.4" fill="none" stroke="#2a2a2a" stroke-width="1.1"/><rect x="1064.8999999999999" y="403.6" width="9.8" height="2.8" fill="#2a2a2a"/><rect x="1064.8999999999999" y="407.6" width="9.8" height="2.8" fill="#2a2a2a"/><rect x="1096.8999999999999" y="402.6" width="11.8" height="8.6" rx="1.4" fill="none" stroke="#2a2a2a" stroke-width="1.1"/><rect x="1097.8999999999999" y="403.6" width="9.8" height="3" fill="#2a2a2a"/><rect x="1129.5" y="402.6" width="11.8" height="8.6" rx="1.4" fill="none" stroke="#2a2a2a" stroke-width="1.1"/><rect x="1130.5" y="407.2" width="9.8" height="3.2" fill="#2a2a2a"/></svg>
<div class="a" style="left:303.8px;top:77.2px;width:1px;height:204.4px;background:#dcdcdc;"></div>
<svg style="left:-360.2px;top:-355.8px" width="1303" height="790" viewBox="0 0 1303 790"><rect x="483.2" y="523" width="99.8" height="0.9" fill="#1a1a1a"/><rect x="483.2" y="528" width="99.8" height="0.9" fill="#1a1a1a"/><rect x="483.2" y="533" width="99.8" height="0.9" fill="#1a1a1a"/><rect x="483.2" y="538" width="99.8" height="0.9" fill="#1a1a1a"/><rect x="483.2" y="543" width="99.8" height="0.9" fill="#1a1a1a"/><rect x="483.2" y="523" width="0.9" height="21" fill="#1a1a1a"/><rect x="545.2" y="523" width="0.9" height="21" fill="#1a1a1a"/><rect x="488.2" y="528.4" width="2.2" height="10.2" fill="#000"/><rect x="492" y="528.4" width="2.2" height="10.2" fill="#000"/></svg>
<div class="a" style="left:304.8px;top:89.35px;width:491.8px;height:17.55px;background:#f4f5f5;"></div>
<div class="t" style="top:94.33px;font-size:10.95px;color:#262626;left:330.0px;">Piano 1+2/3+4</div>
<div class="t" style="top:94.33px;font-size:10.95px;color:#262626;left:565.8px;">Normal</div>
<div class="t" style="top:94.33px;font-size:10.95px;color:#262626;left:669.4px;">1/2</div>
<div class="t" style="top:94.33px;font-size:10.95px;color:#262626;right:calc(100% - 789.2px);">8</div>
<div class="a" style="left:304.8px;top:106.8px;width:491.8px;height:17.55px;background:#ffffff;"></div>
<div class="t" style="top:110.03px;font-size:10.95px;color:#262626;left:330.0px;">Piccolo</div>
<div class="t" style="top:110.03px;font-size:10.95px;color:#262626;left:565.8px;">Normal</div>
<div class="t" style="top:110.03px;font-size:10.95px;color:#262626;left:669.4px;">1</div>
<div class="t" style="top:110.03px;font-size:10.95px;color:#262626;right:calc(100% - 789.2px);">8</div>
<div class="a" style="left:304.8px;top:124.25px;width:491.8px;height:17.55px;background:#f4f5f5;"></div>
<div class="t" style="top:127.47px;font-size:10.95px;color:#262626;left:330.0px;">Sax Soprano</div>
<div class="t" style="top:127.47px;font-size:10.95px;color:#262626;left:565.8px;">Normal</div>
<div class="t" style="top:127.47px;font-size:10.95px;color:#262626;left:669.4px;">1</div>
<div class="t" style="top:127.47px;font-size:10.95px;color:#262626;right:calc(100% - 789.2px);">8</div>
<div class="a" style="left:304.8px;top:141.7px;width:491.8px;height:17.55px;background:#ffffff;"></div>
<div class="t" style="top:144.93px;font-size:10.95px;color:#262626;left:330.0px;">Sax Tenor</div>
<div class="t" style="top:144.93px;font-size:10.95px;color:#262626;left:565.8px;">Normal</div>
<div class="t" style="top:144.93px;font-size:10.95px;color:#262626;left:669.4px;">1</div>
<div class="t" style="top:144.93px;font-size:10.95px;color:#262626;right:calc(100% - 789.2px);">8</div>
<div class="a" style="left:304.8px;top:159.15px;width:491.8px;height:17.55px;background:#f4f5f5;"></div>
<div class="t" style="top:162.38px;font-size:10.95px;color:#262626;left:330.0px;">Trompette en La</div>
<div class="t" style="top:162.38px;font-size:10.95px;color:#262626;left:565.8px;">Normal</div>
<div class="t" style="top:162.38px;font-size:10.95px;color:#262626;left:669.4px;">1</div>
<div class="t" style="top:162.38px;font-size:10.95px;color:#262626;right:calc(100% - 789.2px);">8</div>
<div class="a" style="left:304.8px;top:176.6px;width:491.8px;height:17.55px;background:#ffffff;"></div>
<div class="t" style="top:179.83px;font-size:10.95px;color:#262626;left:330.0px;">Trompette en Si<span style="font-size:9px;position:relative;top:-1px;font-weight:bold;font-family:'DejaVu Sans',sans-serif">♭</span></div>
<div class="t" style="top:179.83px;font-size:10.95px;color:#262626;left:565.8px;">Normal</div>
<div class="t" style="top:179.83px;font-size:10.95px;color:#262626;left:669.4px;">1</div>
<div class="t" style="top:179.83px;font-size:10.95px;color:#262626;right:calc(100% - 789.2px);">8</div>
<div class="a" style="left:304.8px;top:194.05px;width:491.8px;height:17.55px;background:#f4f5f5;"></div>
<div class="t" style="top:197.28px;font-size:10.95px;color:#262626;left:330.0px;">Violon Alto</div>
<div class="t" style="top:197.28px;font-size:10.95px;color:#262626;left:565.8px;">Normal</div>
<div class="t" style="top:197.28px;font-size:10.95px;color:#262626;left:669.4px;">1</div>
<div class="t" style="top:197.28px;font-size:10.95px;color:#262626;right:calc(100% - 789.2px);">8</div>
<div class="a" style="left:304.8px;top:211.5px;width:491.8px;height:17.55px;background:#ffffff;"></div>
<div class="t" style="top:214.72px;font-size:10.95px;color:#262626;left:330.0px;">Violoncelle</div>
<div class="t" style="top:214.72px;font-size:10.95px;color:#262626;left:565.8px;">Normal</div>
<div class="t" style="top:214.72px;font-size:10.95px;color:#262626;left:669.4px;">1</div>
<div class="t" style="top:214.72px;font-size:10.95px;color:#262626;right:calc(100% - 789.2px);">8</div>
<div class="a" style="left:304.8px;top:228.95px;width:491.8px;height:17.55px;background:#dcdcdc;"></div>
<div class="t" style="top:232.18px;font-size:10.95px;color:#262626;left:330.0px;">Batterie</div>
<div class="t" style="top:232.18px;font-size:10.95px;color:#262626;left:565.8px;">Mappé</div>
<div class="t" style="top:232.18px;font-size:10.95px;color:#262626;left:669.4px;">2</div>
<div class="t" style="top:232.18px;font-size:10.95px;color:#262626;right:calc(100% - 789.2px);">8</div>
<svg style="left:315.2px;top:233.34999999999997px" width="10" height="10" viewBox="0 0 10 10"><path d="M0.8 5.8 L3.2 8.6 L8.8 0.8" fill="none" stroke="#6a6a6a" stroke-width="1"/></svg>
<div class="a" style="left:304.8px;top:246.4px;width:491.8px;height:17.55px;background:#ffffff;"></div>
<div class="t" style="top:249.63px;font-size:10.95px;color:#262626;left:330.0px;">Batterie*copié</div>
<div class="t" style="top:249.63px;font-size:10.95px;color:#262626;left:565.8px;">Mappé</div>
<div class="t" style="top:249.63px;font-size:10.95px;color:#262626;left:669.4px;">2</div>
<div class="t" style="top:249.63px;font-size:10.95px;color:#262626;right:calc(100% - 789.2px);">8</div>
<div class="a" style="left:304.8px;top:263.85px;width:491.8px;height:17.55px;background:#f4f5f5;"></div>
<div class="t" style="top:267.07px;font-size:10.95px;color:#262626;left:330.0px;">Batterie*copié</div>
<div class="t" style="top:267.07px;font-size:10.95px;color:#262626;left:565.8px;">Mappé</div>
<div class="t" style="top:267.07px;font-size:10.95px;color:#262626;left:669.4px;">2</div>
<div class="t" style="top:267.07px;font-size:10.95px;color:#262626;right:calc(100% - 789.2px);">8</div>
<div class="a" style="left:304.8px;top:77.4px;width:504px;height:22.8px;background:#ffffff;"></div>
<div class="a" style="left:304.8px;top:100.2px;width:492px;height:0.7px;background:#ededed;"></div>
<div class="t" style="top:84.60px;font-size:10.2px;color:#262626;left:333.4px;">Nom</div>
<div class="t" style="top:84.60px;font-size:10.2px;color:#262626;left:569.8px;">Type</div>
<div class="t" style="top:84.60px;font-size:10.2px;color:#262626;left:673.3px;">Voix</div>
<div class="t" style="top:84.60px;font-size:10.2px;color:#262626;left:761.0px;">Taille</div>
<div class="a" style="left:328.2px;top:82.2px;width:0.8px;height:13.6px;background:#dcdcdc;"></div>
<div class="a" style="left:564.2px;top:82.2px;width:0.8px;height:13.6px;background:#dcdcdc;"></div>
<div class="a" style="left:668.0px;top:82.2px;width:0.8px;height:13.6px;background:#dcdcdc;"></div>
<div class="a" style="left:755.2px;top:82.2px;width:0.8px;height:13.6px;background:#dcdcdc;"></div>
<div class="a" style="left:799.5999999999999px;top:232.59999999999997px;width:6px;height:45.8px;border-radius:3px;background:#c1c1c1"></div>
<div class="a" style="left:0.0px;top:281.4px;width:809px;height:83.4px;background:#ffffff;"></div>
<div class="a" style="left:0.0px;top:281.2px;width:809px;height:1px;background:#c8c8c8;"></div>
<div class="a" style="left:0.0px;top:282.2px;width:809px;height:33px;background:#ececec;"></div>
<div class="a" style="left:0.0px;top:288.4px;width:809px;height:1px;background:#c4c4c4;"></div>
<div class="a" style="left:0.0px;top:314.6px;width:809px;height:1px;background:#bebebe;"></div>
<div class="a" style="left:0;top:338.8px;width:809px;height:26px;overflow:hidden">
<div class="a" style="left:4.400000000000034px;top:-10.600000000000023px;width:38.8px;height:26.2px;border-radius:5px;background:#fff;box-shadow:0 0 0 0.6px #d9d9d9, 0 0.5px 1.5px rgba(0,0,0,.16);"></div>
<div class="a" style="left:57.400000000000034px;top:-10.600000000000023px;width:54.8px;height:18.2px;border-radius:5px;background:#fff;box-shadow:0 0 0 0.6px #d9d9d9, 0 0.5px 1.5px rgba(0,0,0,.16);"></div>
<div class="t" style="top:-7.80px;font-size:12px;color:#262626;left:84.8px;transform:translateX(-50%);">30</div>
<div class="a" style="left:204.00000000000006px;top:-10.600000000000023px;width:53px;height:18.2px;border-radius:5px;background:#fff;box-shadow:0 0 0 0.6px #d9d9d9, 0 0.5px 1.5px rgba(0,0,0,.16);"></div>
<div class="t" style="top:-7.80px;font-size:12px;color:#262626;left:212.5px;">Show</div>
<svg style="left:244.3px;top:-1.2000000000000455px" width="7" height="5" viewBox="0 0 7 5"><path d="M0.8 0.9 L3.5 3.8 L6.2 0.9" fill="none" stroke="#2a2a2a" stroke-width="1.4" stroke-linecap="round" stroke-linejoin="round"/></svg>
<div class="a" style="left:266.59999999999997px;top:-10.600000000000023px;width:54.4px;height:18.2px;border-radius:5px;background:#fff;box-shadow:0 0 0 0.6px #d9d9d9, 0 0.5px 1.5px rgba(0,0,0,.16);"></div>
<div class="t" style="top:-7.80px;font-size:12px;color:#262626;left:275.1px;">Down</div>
<svg style="left:308.2999999999999px;top:-1.2000000000000455px" width="7" height="5" viewBox="0 0 7 5"><path d="M0.8 0.9 L3.5 3.8 L6.2 0.9" fill="none" stroke="#2a2a2a" stroke-width="1.4" stroke-linecap="round" stroke-linejoin="round"/></svg>
<div class="a" style="left:331.00000000000006px;top:-10.600000000000023px;width:63.5px;height:18.2px;border-radius:5px;background:#fff;box-shadow:0 0 0 0.6px #d9d9d9, 0 0.5px 1.5px rgba(0,0,0,.16);"></div>
<div class="t" style="top:-7.80px;font-size:12px;color:#262626;left:339.5px;">Normal</div>
<svg style="left:381.8px;top:-1.2000000000000455px" width="7" height="5" viewBox="0 0 7 5"><path d="M0.8 0.9 L3.5 3.8 L6.2 0.9" fill="none" stroke="#2a2a2a" stroke-width="1.4" stroke-linecap="round" stroke-linejoin="round"/></svg>
<div class="a" style="left:403.7px;top:-10.600000000000023px;width:55.7px;height:18.2px;border-radius:5px;background:#fff;box-shadow:0 0 0 0.6px #d9d9d9, 0 0.5px 1.5px rgba(0,0,0,.16);"></div>
<div class="t" style="top:-7.80px;font-size:12px;color:#262626;left:412.2px;">Auto</div>
<svg style="left:446.7px;top:-1.2000000000000455px" width="7" height="5" viewBox="0 0 7 5"><path d="M0.8 0.9 L3.5 3.8 L6.2 0.9" fill="none" stroke="#2a2a2a" stroke-width="1.4" stroke-linecap="round" stroke-linejoin="round"/></svg>
<div class="a" style="left:468.50000000000006px;top:-10.600000000000023px;width:55.4px;height:18.2px;border-radius:5px;background:#fff;box-shadow:0 0 0 0.6px #d9d9d9, 0 0.5px 1.5px rgba(0,0,0,.16);"></div>
<div class="t" style="top:-7.80px;font-size:12px;color:#262626;left:477.0px;">Auto</div>
<svg style="left:511.2px;top:-1.2000000000000455px" width="7" height="5" viewBox="0 0 7 5"><path d="M0.8 0.9 L3.5 3.8 L6.2 0.9" fill="none" stroke="#2a2a2a" stroke-width="1.4" stroke-linecap="round" stroke-linejoin="round"/></svg>
<div class="a" style="left:532.9000000000001px;top:-10.600000000000023px;width:56.4px;height:18.2px;border-radius:5px;background:#fff;box-shadow:0 0 0 0.6px #d9d9d9, 0 0.5px 1.5px rgba(0,0,0,.16);"></div>
<div class="t" style="top:-7.80px;font-size:12px;color:#262626;left:541.4px;">Horiz.</div>
<svg style="left:576.5999999999999px;top:-1.2000000000000455px" width="7" height="5" viewBox="0 0 7 5"><path d="M0.8 0.9 L3.5 3.8 L6.2 0.9" fill="none" stroke="#2a2a2a" stroke-width="1.4" stroke-linecap="round" stroke-linejoin="round"/></svg>
<div class="a" style="left:597.0999999999999px;top:-10.600000000000023px;width:70.9px;height:18.2px;border-radius:5px;background:#fff;box-shadow:0 0 0 0.6px #d9d9d9, 0 0.5px 1.5px rgba(0,0,0,.16);"></div>
<div class="t" style="top:-7.80px;font-size:12px;color:#262626;left:605.6px;">None</div>
<svg style="left:655.3px;top:-1.2000000000000455px" width="7" height="5" viewBox="0 0 7 5"><path d="M0.8 0.9 L3.5 3.8 L6.2 0.9" fill="none" stroke="#2a2a2a" stroke-width="1.4" stroke-linecap="round" stroke-linejoin="round"/></svg>
<div class="a" style="left:681.0px;top:1.1999999999999318px;width:54px;height:17.6px;border-radius:5px;background:#fff;box-shadow:0 0 0 0.6px #d9d9d9, 0 0.5px 1.5px rgba(0,0,0,.16);"></div>
<div class="t" style="top:4.00px;font-size:12px;color:#262626;left:707.6px;transform:translateX(-50%);">-8</div>
<svg style="left:685.3999999999999px;top:7.600000000000023px" width="9" height="6" viewBox="0 0 9 6"><path d="M0.8 0.9 L4.5 4.8 L8.2 0.9" fill="none" stroke="#8a8a8a" stroke-width="1"/></svg>
<svg style="left:721.8px;top:7.399999999999977px" width="9" height="6" viewBox="0 0 9 6"><path d="M0.8 5.1 L4.5 1.2 L8.2 5.1" fill="none" stroke="#8a8a8a" stroke-width="1"/></svg>
<div class="a" style="left:768.5999999999999px;top:1.1999999999999318px;width:60px;height:17.6px;border-radius:5px;background:#fff;box-shadow:0 0 0 0.6px #d9d9d9, 0 0.5px 1.5px rgba(0,0,0,.16);"></div>
<div class="t" style="top:4.00px;font-size:12px;color:#262626;left:775.4px;">Kick</div>
<div class="a" style="left:796.8px;top:0px;width:12.4px;height:26px;background:#ffffff;"></div>
</div>
<div class="a" style="left:48.8px;top:338.8px;width:0.9px;height:25.6px;background:#d4d4d4;"></div>
<div class="a" style="left:122.2px;top:338.8px;width:0.9px;height:25.6px;background:#d4d4d4;"></div>
<div class="a" style="left:197.6px;top:288.8px;width:1px;height:76px;background:#c4c4c4;"></div>
<div class="a" style="left:672.0px;top:288.8px;width:1px;height:76px;background:#c4c4c4;"></div>
<div class="a" style="left:0.0px;top:338.4px;width:797px;height:0.7px;background:#eeeeee;"></div>
<div class="a" style="left:0.0px;top:364.4px;width:809px;height:0.9px;background:#d6d6d6;"></div>
<div class="a" style="left:5.600000000000023px;top:292.59999999999997px;width:24.4px;height:17.6px;border-radius:5px;background:#fff;box-shadow:0 0 0 0.5px #dadada, 0 0.5px 1.5px rgba(0,0,0,.18)"></div>
<svg style="left:5.600000000000023px;top:292.59999999999997px" width="24.4" height="17.6" viewBox="0 0 24.4 17.6"><path d="M8.2 8.8 H16.2 M12.2 4.8 V12.8" stroke="#2a2a2a" stroke-width="1" fill="none"/></svg>
<div class="a" style="left:205.40000000000003px;top:292.59999999999997px;width:24.4px;height:17.6px;border-radius:5px;background:#fff;box-shadow:0 0 0 0.5px #dadada, 0 0.5px 1.5px rgba(0,0,0,.18)"></div>
<svg style="left:205.40000000000003px;top:292.59999999999997px" width="24.4" height="17.6" viewBox="0 0 24.4 17.6"><path d="M8.2 8.8 H16.2 M12.2 4.8 V12.8" stroke="#2a2a2a" stroke-width="1" fill="none"/></svg>
<div class="a" style="left:678.5999999999999px;top:292.59999999999997px;width:24.4px;height:17.6px;border-radius:5px;background:#fff;box-shadow:0 0 0 0.5px #dadada, 0 0.5px 1.5px rgba(0,0,0,.18)"></div>
<svg style="left:678.5999999999999px;top:292.59999999999997px" width="24.4" height="17.6" viewBox="0 0 24.4 17.6"><path d="M8.2 8.8 H16.2 M12.2 4.8 V12.8" stroke="#2a2a2a" stroke-width="1" fill="none"/></svg>
<div class="t" style="top:295.50px;font-size:11.8px;color:#262626;left:116.2px;transform:translateX(-50%);">Portée</div>
<div class="t" style="top:295.50px;font-size:11.8px;color:#262626;left:452.4px;transform:translateX(-50%);">Voix</div>
<div class="t" style="top:322.80px;font-size:9.8px;color:#262626;left:4.4px;">Clef</div>
<div class="t" style="top:322.80px;font-size:9.8px;color:#262626;left:53.2px;">Espace</div>
<div class="t" style="top:322.80px;font-size:9.8px;color:#262626;left:126.8px;">Taille</div>
<div class="t" style="top:322.80px;font-size:9.8px;color:#262626;left:203.4px;">Silence</div>
<div class="t" style="top:322.80px;font-size:9.8px;color:#262626;left:266.6px;">Hampe</div>
<div class="t" style="top:322.80px;font-size:9.8px;color:#262626;left:331.0px;">Pos. hampe</div>
<div class="t" style="top:322.80px;font-size:9.8px;color:#262626;left:403.6px;">Liaison</div>
<div class="t" style="top:322.80px;font-size:9.8px;color:#262626;left:468.2px;">Duolet</div>
<div class="t" style="top:322.80px;font-size:9.8px;color:#262626;left:533.2px;">Barre</div>
<div class="t" style="top:322.80px;font-size:9.8px;color:#262626;left:599.4px;">Couleur</div>
<div class="t" style="top:322.80px;font-size:9.8px;color:#262626;left:675.4px;">Position</div>
<div class="t" style="top:322.80px;font-size:9.8px;color:#262626;left:749.6px;">Groupe</div>
<div class="a" style="left:48.4px;top:320.6px;width:0.9px;height:13.2px;background:#e6e6e6;"></div>
<div class="a" style="left:121.8px;top:320.6px;width:0.9px;height:13.2px;background:#e6e6e6;"></div>
<div class="a" style="left:261.6px;top:320.6px;width:0.9px;height:13.2px;background:#e6e6e6;"></div>
<div class="a" style="left:326.2px;top:320.6px;width:0.9px;height:13.2px;background:#e6e6e6;"></div>
<div class="a" style="left:399.8px;top:320.6px;width:0.9px;height:13.2px;background:#e6e6e6;"></div>
<div class="a" style="left:464.0px;top:320.6px;width:0.9px;height:13.2px;background:#e6e6e6;"></div>
<div class="a" style="left:529.0px;top:320.6px;width:0.9px;height:13.2px;background:#e6e6e6;"></div>
<div class="a" style="left:595.0px;top:320.6px;width:0.9px;height:13.2px;background:#e6e6e6;"></div>
<div class="a" style="left:745.0px;top:320.6px;width:0.9px;height:13.2px;background:#e6e6e6;"></div>
<div class="a" style="left:799.5999999999999px;top:347.99999999999994px;width:6px;height:14.4px;border-radius:3px;background:#c1c1c1"></div>
<div class="a" style="left:2.400000000000034px;top:368.99999999999994px;width:601px;height:7px;border-radius:3.5px;background:#c2c2c2"></div>
</div>
<div class="a" style="left:1290.3px;top:71px;width:12.7px;height:705px;background:#3a3a3a;"></div>
<div class="a" style="left:1290.3px;top:71px;width:1px;height:705px;background:#303030;"></div>
<div class="a" style="left:1290.3px;top:776px;width:12.7px;height:12.5px;background:#33353a;"></div>
<div class="a" style="left:0px;top:788.5px;width:1303px;height:1.5px;background:#ffffff;"></div>
<div class="a" style="left:0px;top:1px;width:1px;height:788px;background:#5c5c5c;"></div>
<svg style="left:0;top:778px" width="11" height="11" viewBox="0 0 11 11"><path d="M0 0 V10.5 H9 C4 10.2 0.6 6 0 0 Z" fill="#1c1c10"/></svg>
<svg style="left:1292px;top:778px" width="11" height="11" viewBox="0 0 11 11"><path d="M11 1 V10.5 H2 C7 10.2 10.4 6 11 1 Z" fill="#3a2c0c"/></svg>
</div></body></html>
